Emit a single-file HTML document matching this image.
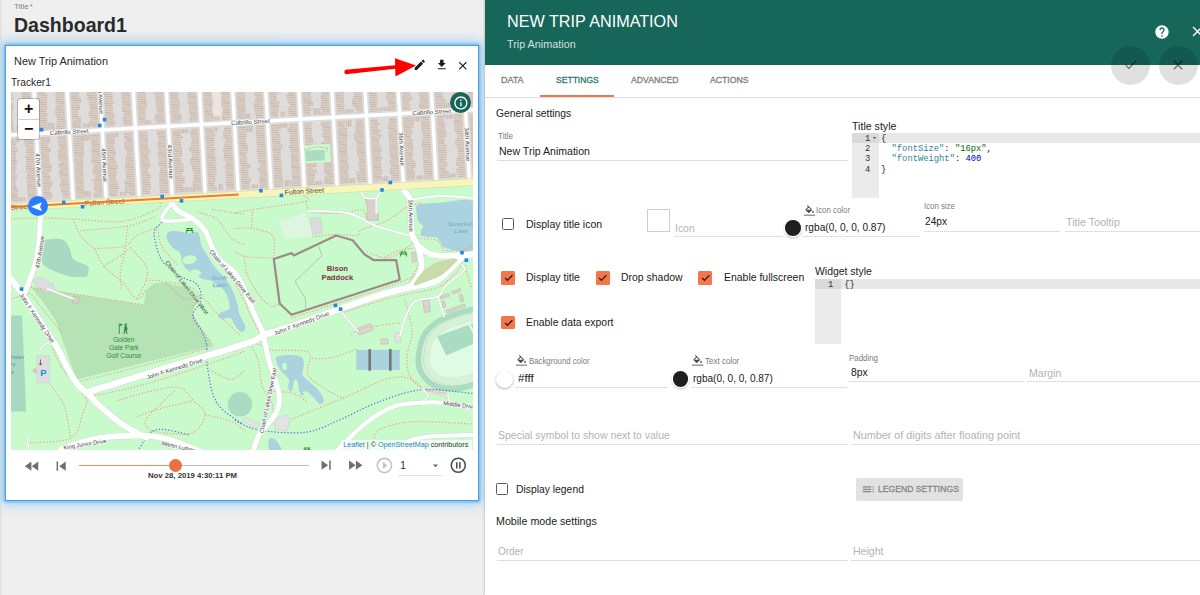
<!DOCTYPE html>
<html lang="en">
<head>
<meta charset="utf-8">
<title>Dashboard1</title>
<style>
html,body{margin:0;padding:0}
body{width:1200px;height:595px;overflow:hidden;position:relative;background:#efefef;font-family:"Liberation Sans",sans-serif}
.t{position:absolute;white-space:nowrap;line-height:normal;display:block;transform-origin:0 0}
.ul{position:absolute;height:1px;display:block;background:repeating-linear-gradient(90deg,#d2d2d2 0 1px,#efefef 1px 2px)}
.ic{position:absolute;display:block}
#card{position:absolute;left:5px;top:45px;width:472px;height:453.5px;background:#fff;border:1px solid #4b9fe3;box-shadow:0 0 3px 1px rgba(60,160,240,.7),0 0 12px 3px rgba(105,190,248,.58)}
#panel{position:absolute;left:485px;top:0;width:715px;height:595px;background:#fff;box-shadow:-1px 0 2px rgba(0,0,0,.16)}
#hdr{position:absolute;left:485px;top:0;width:715px;height:65px;background:#16665a}
.fab{position:absolute;width:39px;height:39px;border-radius:50%;background:rgba(0,0,0,.12)}
.cb{position:absolute;width:10.4px;height:10.4px;border:1.4px solid #5c5c5c;border-radius:1.5px;background:#fff}
.cbx{position:absolute;width:13.5px;height:13.5px;margin:-.2px 0 0 -.3px;border-radius:1.5px;background:#f4764b}
.mono{font-family:"Liberation Mono",monospace;font-size:8.8px;position:absolute;white-space:pre;line-height:10.18px;color:#222}
.gut{position:absolute;background:#ebebeb}
.al{position:absolute;background:#e8e8e8}
.gal{position:absolute;background:#dadada}
#mapwrap{position:absolute;left:11px;top:91.5px;width:462px;height:358px;overflow:hidden;background:#c8facc}
</style>
</head>
<body>
<div id="lstrip" style="position:absolute;left:0;top:0;width:2px;height:595px;background:#e4e4e4"></div>
<div id="card"></div>
<div id="mapwrap">
<svg width="462" height="358" viewBox="11 91.5 462 358" style="display:block;font-family:'Liberation Sans',sans-serif">
<defs>
<pattern id="bld" width="4" height="2.25" patternUnits="userSpaceOnUse"><rect width="4" height="2.25" fill="#d9cec6"/><rect width="4" height=".55" fill="#c4b2a6"/></pattern>
<pattern id="bldh" width="2.2" height="4" patternUnits="userSpaceOnUse"><rect width="2.2" height="4" fill="#d9cec6"/><rect width=".55" height="4" fill="#c4b2a6"/></pattern>
</defs>
<rect x="11" y="91.5" width="462" height="358" fill="#c8facc"/>
<polygon points="30.9,286.8 143.8,304.4 146,289.7 153.6,282.9 165.7,282.1 177.8,285.2 189.9,287.4 198.8,297.1 191.4,312.4 203,330 212.6,345.6 78,378.8 75.6,376.5 55.6,320 42.6,300.9" fill="#b5e3b5"/>
<polygon points="11,315 22.1,315 26.2,410.9 11,410.9" fill="#a8d9c1"/>
<path d="M40.3 242C42.2 239.4 48.1 238.9 52 238.5C55.9 238.1 60.8 237.9 63.8 239.7C66.8 241.4 68.4 245.9 70 249C71.6 252.1 70.3 255.7 73.2 258.5C76.1 261.3 84.9 263.4 87.4 265.6C89.9 267.9 88.4 270.2 88 272C87.6 273.8 88.6 275.7 85 276.2C81.4 276.7 72.9 276.8 66.2 275C59.5 273.2 49.3 269.1 45 265.6C40.7 262.1 41.3 257.9 40.5 254C39.7 250.1 38.4 244.6 40.3 242Z" fill="#a9d9c2"/>
<polygon points="278.5,220.9 305.6,211.5 312.6,236.2 284.4,238.5" fill="#def6df"/>
<polygon points="310.3,217.4 320.9,217.4 322,232.6 312.6,233.8" fill="#dcdcdc" stroke="#c4c4c4" stroke-width=".5"/>
<path d="M167.4 232.4C168.6 230.8 171.4 230.5 174.8 230.5C178.2 230.5 184 232.2 187.7 232.4C191.4 232.6 195 230.9 197 231.5C199 232.1 198.9 233.8 199.7 236.1C200.5 238.4 200.2 241.9 201.6 245.3C203 248.7 205.8 252.7 208.1 256.4C210.4 260.1 213.1 264.4 215.5 267.5C217.9 270.6 220.7 272.4 222.8 274.9C225 277.4 226.6 279.2 228.4 282.3C230.2 285.4 232.4 289.7 233.9 293.4C235.4 297.1 236.7 301.1 237.6 304.5C238.5 307.9 238.3 310.3 239.5 313.7C240.7 317.1 244.2 322 245 324.8C245.8 327.6 245 329.5 244.1 330.4C243.2 331.3 241.2 331.6 239.5 330.4C237.8 329.2 235.5 325.2 233.9 323C232.3 320.8 232.3 318.2 230.2 317.4C228 316.6 223 318.8 221 318.3C219 317.8 217.9 315.8 218.2 314.6C218.5 313.4 221 312.1 222.8 311C224.7 309.9 228.4 310.2 229.3 308.2C230.2 306.2 229.3 302 228.4 298.9C227.5 295.8 225.7 292.2 223.8 289.7C222 287.2 219.3 285.6 217.3 284.1C215.3 282.6 214.3 281.4 211.8 280.5C209.3 279.6 205 279.5 202.5 278.6C200 277.7 199.5 276.4 197 274.9C194.5 273.4 190.2 271.5 187.7 269.4C185.2 267.2 183.4 264.8 182.2 262C181 259.2 181.9 255.2 180.3 252.7C178.8 250.2 175.1 249.3 172.9 247.2C170.8 245 168.3 242.3 167.4 239.8C166.5 237.3 166.2 234 167.4 232.4Z" fill="#aad3df"/>
<ellipse cx="189.6" cy="259.2" rx="7.2" ry="4.4" fill="#c8facc" transform="rotate(-8 189.6 259.2)"/>
<ellipse cx="196" cy="272" rx="5.3" ry="3.1" fill="#c8facc" transform="rotate(12 196 272)"/>
<path d="M417.4 204.4C420.5 203.2 432.3 202.6 440 202.3C447.7 202 470.3 195.8 475 202C479.7 208.2 478.8 242.9 475 249C471.2 255.1 451.3 248.8 446.8 248C442.3 247.2 442.3 244.4 441 243C439.7 241.6 439 238.3 437.4 237.4C435.8 236.5 431.2 236.8 429 236.5C426.8 236.2 422 235.9 420.9 235C419.8 234.1 420.7 231.3 421 230C421.3 228.7 423.5 226.7 423.2 225.6C422.9 224.5 419.8 222.9 419 222C418.2 221.1 417.7 220 417.4 218.5C417.1 217 416.5 212.9 416.5 211C416.5 209.1 414.3 205.6 417.4 204.4Z" fill="#aad3df"/>
<path d="M276.3 356.7C277.8 355.6 282.8 354.7 286.5 354.6C290.2 354.5 298.3 354.8 300.9 356.2C303.5 357.6 303.7 361.1 303.9 363.8C304.1 366.5 301.9 371.6 302.5 374.1C303.1 376.6 306.1 378.4 308 380.2C309.9 382 313.2 384.4 315.2 386.4C317.2 388.4 320.1 391.5 321.4 393.6C322.7 395.7 324.1 399.2 323.8 400.7C323.5 402.2 321 404.1 319.7 403.8C318.4 403.5 316.5 400.1 315.2 398.7C313.9 397.3 312.4 395.7 311.1 394.6C309.8 393.5 307.9 391.6 306.6 391.1C305.3 390.6 302.9 391.1 302.5 391.5C302.1 391.9 304.1 393.5 303.9 394C303.7 394.5 302.1 395.3 301.3 394.6C300.5 393.9 299.3 391.5 298.8 389.5C298.3 387.5 298.4 382.8 297.8 381.3C297.2 379.8 295.4 378.8 294.7 379.2C294 379.6 293.7 382.7 293.3 384.3C292.9 385.9 292.9 389 292.3 389.9C291.7 390.8 290.2 391.2 289.6 390.5C289 389.8 288.3 387.1 288.2 385.4C288.1 383.7 289.6 380.9 289 379.2C288.4 377.5 286 375.8 284.5 374.1C283 372.4 280.5 369.7 279.3 367.9C278.1 366.1 277.1 363.5 276.7 361.8C276.2 360.1 274.8 357.8 276.3 356.7Z" fill="#aad3df"/>
<ellipse cx="284.500" cy="365.900" rx="2.400" ry="3.600" fill="#c8facc"/>
<path d="M269 449.5C268.9 448.1 268.2 443 268.5 441C268.8 439 269.6 437.6 271 437.6C272.4 437.6 275.2 439 277 441C278.8 443 281.2 448.1 282 449.5Z" fill="#aad3df"/>
<path d="M235 296C235.6 297.5 237.2 300.7 238.5 305C239.8 309.3 242.2 318 242.5 322C242.8 326 240.4 327.8 240 329" fill="none"/>
<circle cx="240" cy="403.800" r="12.200" fill="#a9dcc2"/>
<rect x="356.2" y="349.4" width="43.5" height="20" fill="#aad3df"/>
<rect x="368.4" y="348.6" width="2.6" height="21.6" fill="#767676"/><rect x="389" y="348.6" width="2.6" height="21.6" fill="#767676"/>
<clipPath id="stc"><path d="M475 305.6C467.5 306.9 461.8 308.4 455.1 310.7C448.4 313 440.6 315.6 434.9 319.7C429.2 323.8 424 328.5 420.8 335C417.6 341.5 415.8 352.3 415.5 358.8C415.2 365.3 416.5 369.4 419.3 374.1C422.1 378.8 426.6 384 432.1 386.9C437.6 389.8 445.4 391.2 452.5 391.2C459.6 391.2 467.1 389.4 475 386.9C482.9 384.4 492.5 383.8 500 376C507.5 368.2 520 352.2 520 340C520 327.8 507.5 308.7 500 303C492.5 297.3 482.5 304.3 475 305.6Z"/></clipPath>
<g clip-path="url(#stc)">
<path d="M475 305.6C467.5 306.9 461.8 308.4 455.1 310.7C448.4 313 440.6 315.6 434.9 319.7C429.2 323.8 424 328.5 420.8 335C417.6 341.5 415.8 352.3 415.5 358.8C415.2 365.3 416.5 369.4 419.3 374.1C422.1 378.8 426.6 384 432.1 386.9C437.6 389.8 445.4 391.2 452.5 391.2C459.6 391.2 467.1 389.4 475 386.9C482.9 384.4 492.5 383.8 500 376C507.5 368.2 520 352.2 520 340C520 327.8 507.5 308.7 500 303C492.5 297.3 482.5 304.3 475 305.6Z" fill="#e0fbe3" stroke="#d7f1d9" stroke-width="29"/>
<path d="M475 305.6C467.5 306.9 461.8 308.4 455.1 310.7C448.4 313 440.6 315.6 434.9 319.7C429.2 323.8 424 328.5 420.8 335C417.6 341.5 415.8 352.3 415.5 358.8C415.2 365.3 416.5 369.4 419.3 374.1C422.1 378.8 426.6 384 432.1 386.9C437.6 389.8 445.4 391.2 452.5 391.2C459.6 391.2 467.1 389.4 475 386.9C482.9 384.4 492.5 383.8 500 376C507.5 368.2 520 352.2 520 340C520 327.8 507.5 308.7 500 303C492.5 297.3 482.5 304.3 475 305.6Z" fill="none" stroke="#a3c4a8" stroke-width=".8" stroke-dasharray="1.2 1.3" transform="translate(70.5 52.5) scale(.85)"/>
<path d="M475 305.6C467.5 306.9 461.8 308.4 455.1 310.7C448.4 313 440.6 315.6 434.9 319.7C429.2 323.8 424 328.5 420.8 335C417.6 341.5 415.8 352.3 415.5 358.8C415.2 365.3 416.5 369.4 419.3 374.1C422.1 378.8 426.6 384 432.1 386.9C437.6 389.8 445.4 391.2 452.5 391.2C459.6 391.2 467.1 389.4 475 386.9C482.9 384.4 492.5 383.8 500 376C507.5 368.2 520 352.2 520 340C520 327.8 507.5 308.7 500 303C492.5 297.3 482.5 304.3 475 305.6Z" fill="none" stroke="#abdcc2" stroke-width="11.4"/>
<polygon points="437.2,335.8 468.4,324.5 477.5,341.5 446.1,354.9" fill="#a9dcc2"/>
<polygon points="470.5,323.7 480,320.3 489,337.3 479.500,340.7" fill="#a9dcc2"/>
</g>
<path d="M472 428 L440 431 L414 440 L400 449.500 L472 449.500Z" fill="none"/>
<polygon points="365.6,198.5 376,198.5 376,212.6 378.5,213 378.5,219.7 366.8,219.7 366.8,212.6 368,212" fill="#d9d0c9" stroke="#b9aaa0" stroke-width=".5"/>
<polygon points="32,279 40,277 53,283.5 55,290 47,292 38,287.5" fill="#dedede" stroke="#c8c8c8" stroke-width=".5"/>
<polygon points="73,296 79,296.5 78.5,303 72.5,302.5" fill="#d9d0c9" stroke="#b9aaa0" stroke-width=".5"/>
<polygon points="36.8,355.3 49.7,355.3 49.7,382.4 36.8,382.4" fill="#dedede" stroke="#c8c8c8" stroke-width=".5"/>
<polygon points="273.8,420 286,414 290.3,419 287,430.6 276,429" fill="#e3e3e3" stroke="#c8c8c8" stroke-width=".5"/>
<polygon points="244,417 260,423.5 257,427.5 242,421" fill="#e3e3e3" stroke="#c8c8c8" stroke-width=".5"/>
<polygon points="356.7,328.1 370.8,323 373.3,329.4 359.3,334.5" fill="#ddd7d2" stroke="#b9aaa0" stroke-width=".5"/>
<polygon points="394,333 399.5,332 401,341 396,342.5" fill="#e3e3e3" stroke="#c8c8c8" stroke-width=".5"/>
<polygon points="381,338.5 388,338.5 388,343.5 381,343.5" fill="#ddd7d2" stroke="#b9aaa0" stroke-width=".5"/>
<polygon points="422.8,300 429,299 430.4,311.2 424.5,312" fill="#ddd3cc" stroke="#b9aaa0" stroke-width=".5"/>
<polygon points="411.5,252 415.5,251.5 416.5,261 412.5,261.5" fill="#ddd3cc" stroke="#b9aaa0" stroke-width=".5"/>
<polygon points="440.2,296 448.5,293 449.5,295.5 441,298.5" fill="#ddd3cc" stroke="#b9aaa0" stroke-width=".5"/>
<polygon points="451.6,291 460,288 460.8,290.5 452.5,293.5" fill="#ddd3cc" stroke="#b9aaa0" stroke-width=".5"/>
<polygon points="459.1,294 462,293.5 463.7,300.5 460.8,301" fill="#ddd3cc" stroke="#b9aaa0" stroke-width=".5"/>
<polygon points="441.7,301 444.5,300.5 445.7,306.5 443,307" fill="#ddd3cc" stroke="#b9aaa0" stroke-width=".5"/>
<polygon points="446,310 464.5,303.5 465.5,306 447,312.5" fill="#ddd3cc" stroke="#b9aaa0" stroke-width=".5"/>
<polygon points="426,386 448,393.5 447,397 425,389.5" fill="#e3e3e3" stroke="#c8c8c8" stroke-width=".5"/>
<path d="M10.9 218.5C15.8 218.3 29.9 217.4 40.3 217.4C50.7 217.4 59.5 217.9 73.2 218.5C86.9 219.1 108.9 222.5 122.6 220.9C136.3 219.3 149.1 212.2 155.6 209.1C162.1 205.9 160.5 203.2 161.5 202" fill="none" stroke="#f49f8a" stroke-width="1.15" stroke-dasharray="1.3 1.8"/>
<path d="M73.2 218.5C74.4 221.2 76.8 229.9 80.3 235C83.8 240.1 90.5 244 94.4 249.1C98.3 254.2 99.1 260.1 103.8 265.6C108.5 271.1 117.1 276.5 122.6 282C128.1 287.5 132.9 297.3 136.8 298.5C140.7 299.7 144.6 290.6 146.2 289" fill="none" stroke="#f49f8a" stroke-width="1.15" stroke-dasharray="1.3 1.8"/>
<path d="M80.3 230.3C88.2 229.5 114.9 227.9 127.4 225.6C140 223.2 150.9 217.8 155.6 216.2" fill="none" stroke="#f49f8a" stroke-width="1.15" stroke-dasharray="1.3 1.8"/>
<path d="M127.4 225.6C127 229.5 126.2 241.3 125 249.1C123.8 256.9 120.9 266.1 120.3 272.6C119.7 279.1 121.3 285.4 121.5 288" fill="none" stroke="#f49f8a" stroke-width="1.15" stroke-dasharray="1.3 1.8"/>
<path d="M94.4 248C99.5 247.6 117.9 247.8 125 245.6C132.1 243.4 131.7 237.9 136.8 235C141.9 232.1 152.5 229.2 155.6 228" fill="none" stroke="#f49f8a" stroke-width="1.15" stroke-dasharray="1.3 1.8"/>
<path d="M103.8 265.6C106.9 263.6 117.9 257.1 122.6 253.8C127.3 250.5 130.4 247 132 245.6" fill="none" stroke="#f49f8a" stroke-width="1.15" stroke-dasharray="1.3 1.8"/>
<path d="M132 249C134.4 251.8 143.8 260.5 146.2 265.6C148.6 270.7 147.8 274.2 146.2 279.7C144.6 285.2 138.4 295.4 136.8 298.5" fill="none" stroke="#f49f8a" stroke-width="1.15" stroke-dasharray="1.3 1.8"/>
<path d="M146.2 279.7C149.3 280.1 158.7 278.9 165 282C171.3 285.1 177.9 296.2 183.8 298.5C189.7 300.8 194.8 293.6 200.3 296C205.8 298.4 210.1 306.1 216.8 312.6C223.5 319.1 236.4 331.3 240.3 335" fill="none" stroke="#f49f8a" stroke-width="1.15" stroke-dasharray="1.3 1.8"/>
<path d="M158 225.6C158.4 228.3 158.4 236.9 160.3 242C162.2 247.1 166.6 252.3 169.7 256.2C172.8 260.1 177.5 264 179.1 265.6" fill="none" stroke="#f49f8a" stroke-width="1.15" stroke-dasharray="1.3 1.8"/>
<path d="M198 211.5C201.1 212.7 211.3 214.2 216.8 218.5C222.3 222.8 226.2 233.1 230.9 237.4C235.6 241.7 242.7 243.2 245 244.4" fill="none" stroke="#f49f8a" stroke-width="1.15" stroke-dasharray="1.3 1.8"/>
<path d="M212 209 L245 213.8" fill="none" stroke="#f49f8a" stroke-width="1.15" stroke-dasharray="1.3 1.8"/>
<path d="M10.9 298.5C12.2 298.1 15.7 296.8 19 296C22.3 295.2 27.1 291.8 30.9 293.8C34.7 295.8 36.9 301.7 42 308C47.1 314.3 58.2 327.6 61.5 331.5" fill="none" stroke="#f49f8a" stroke-width="1.15" stroke-dasharray="1.3 1.8"/>
<path d="M10.9 275 L19 289" fill="none" stroke="#f49f8a" stroke-width="1.15" stroke-dasharray="1.3 1.8"/>
<path d="M235 212.6C237.9 212 240.8 211 252.6 209.1C264.4 207.2 297.2 203.2 305.6 200.9C314 198.6 303.6 196 303.2 195" fill="none" stroke="#f49f8a" stroke-width="1.15" stroke-dasharray="1.3 1.8"/>
<path d="M235 228C237.8 228 245.2 226.8 251.5 228C257.8 229.2 268.9 230.3 272.6 235C276.3 239.7 273.6 252.7 273.8 256.2" fill="none" stroke="#f49f8a" stroke-width="1.15" stroke-dasharray="1.3 1.8"/>
<path d="M251.5 228 L252.6 209.1" fill="none" stroke="#f49f8a" stroke-width="1.15" stroke-dasharray="1.3 1.8"/>
<path d="M305.6 200.9C306.8 202.7 306.3 209.6 312.6 211.5C318.9 213.4 335 213 343.2 212.6C351.4 212.2 358.1 208 362 209C365.9 210 366 216.9 366.8 218.5" fill="none" stroke="#f49f8a" stroke-width="1.15" stroke-dasharray="1.3 1.8"/>
<path d="M312.6 236.2C316.5 235.8 328.7 234 336.2 233.8C343.7 233.6 353.1 235.8 357.4 235C361.7 234.2 357.3 231.3 362 229C366.7 226.7 378.1 224.6 385.6 220.9C393.1 217.2 400.5 210 406.8 206.8C413.1 203.7 420.5 202.8 423.2 202" fill="none" stroke="#f49f8a" stroke-width="1.15" stroke-dasharray="1.3 1.8"/>
<path d="M366.8 251.5C369.9 252.5 380.1 257.2 385.6 257.4C391.1 257.6 395 255.2 399.7 252.6C404.4 250 411.4 243.8 413.8 242" fill="none" stroke="#f49f8a" stroke-width="1.15" stroke-dasharray="1.3 1.8"/>
<path d="M291.5 317.4C309.5 311.5 379.3 289.5 399.7 282C420.1 274.5 411.4 274.2 413.8 272.6" fill="none" stroke="#f49f8a" stroke-width="1.15" stroke-dasharray="1.3 1.8"/>
<path d="M235 251.5C237 252.3 240.5 255.2 246.8 256.2C253.1 257.2 268.3 257.2 272.6 257.4" fill="none" stroke="#f49f8a" stroke-width="1.15" stroke-dasharray="1.3 1.8"/>
<path d="M244.4 256.2C244.8 258.9 244.5 266.3 246.8 272.6C249.2 278.9 254.6 288.3 258.5 293.8C262.4 299.3 266.8 304 270.3 305.6C273.8 307.2 278.1 303.6 279.7 303.2" fill="none" stroke="#f49f8a" stroke-width="1.15" stroke-dasharray="1.3 1.8"/>
<path d="M340.9 312.6C348.2 310.3 373.4 302.3 385 299C396.6 295.7 401.9 295 410.7 293C419.5 291 430.9 290 438 287C445.1 284 448.7 279 453 275C457.3 271 461.9 264.8 463.7 262.8" fill="none" stroke="#f49f8a" stroke-width="1.15" stroke-dasharray="1.3 1.8"/>
<path d="M52 345.9C53.6 349.4 57.6 360.7 61.5 367C65.4 373.3 71.3 378 75.6 383.5C79.9 389 85.4 397.2 87.4 400" fill="none" stroke="#f49f8a" stroke-width="1.15" stroke-dasharray="1.3 1.8"/>
<path d="M49.7 383.5C52.1 387 60.3 395.7 63.8 404.7C67.3 413.7 69.7 432.1 70.9 437.6" fill="none" stroke="#f49f8a" stroke-width="1.15" stroke-dasharray="1.3 1.8"/>
<path d="M87.4 400C86.6 402.3 85.3 407.7 82.6 414C79.8 420.3 79.9 432.9 70.9 437.6C61.9 442.3 35.6 441.6 28.5 442.4" fill="none" stroke="#f49f8a" stroke-width="1.15" stroke-dasharray="1.3 1.8"/>
<path d="M94.4 395.3C103 393.3 127.8 388.6 146.2 383.5C164.6 378.4 188.5 370.2 205 364.7C221.5 359.2 238.3 353 245 350.6" fill="none" stroke="#f49f8a" stroke-width="1.15" stroke-dasharray="1.3 1.8"/>
<path d="M118 400C123.5 398.4 140.7 392.8 150.9 390.6C161.1 388.4 172.1 385.4 179.1 387C186.1 388.6 188.9 395.5 193.2 400C197.5 404.5 205.4 408.5 205 414C204.6 419.5 199.9 430.2 190.9 433C181.9 435.8 157.6 431 150.9 430.6" fill="none" stroke="#f49f8a" stroke-width="1.15" stroke-dasharray="1.3 1.8"/>
<path d="M136.8 416.5C139.9 415.3 146.2 412.1 155.6 409.4C165 406.6 186.9 401.6 193.2 400" fill="none" stroke="#f49f8a" stroke-width="1.15" stroke-dasharray="1.3 1.8"/>
<path d="M150.9 430.6C150.1 428.6 142.3 425.5 146.2 418.8C150.1 412.1 169.7 395.3 174.4 390.6" fill="none" stroke="#f49f8a" stroke-width="1.15" stroke-dasharray="1.3 1.8"/>
<path d="M205 414C209.3 415.2 224.2 418.2 230.9 421C237.6 423.8 242.7 429 245 430.6" fill="none" stroke="#f49f8a" stroke-width="1.15" stroke-dasharray="1.3 1.8"/>
<path d="M209.7 369.4C213.2 371 225 378.8 230.9 378.8C236.8 378.8 242.7 371 245 369.4" fill="none" stroke="#f49f8a" stroke-width="1.15" stroke-dasharray="1.3 1.8"/>
<path d="M78 381.5C88.3 378.9 117.7 371.8 140 366C162.3 360.2 200 349.8 212 346.5" fill="none" stroke="#f49f8a" stroke-width="1.15" stroke-dasharray="1.3 1.8"/>
<path d="M235 350.6C238.5 349.4 250.3 343.7 256.2 343.5C262.1 343.3 262.1 348.2 270.3 349.4C278.5 350.6 298.6 349.2 305.6 350.6C312.7 352 307.9 356.6 312.6 357.6C317.3 358.6 326.3 358.1 333.8 356.5C341.3 354.9 353.5 349.6 357.4 348.2" fill="none" stroke="#f49f8a" stroke-width="1.15" stroke-dasharray="1.3 1.8"/>
<path d="M310.3 357.6C309.9 360.3 305.6 368.9 308 374C310.4 379.1 318.5 384.3 324.4 388.2C330.3 392.1 340.1 396 343.2 397.6" fill="none" stroke="#f49f8a" stroke-width="1.15" stroke-dasharray="1.3 1.8"/>
<path d="M291.5 418.8C300.1 415.3 327.5 404.3 343.2 397.6C358.9 390.9 374.6 382.1 385.6 378.8C396.6 375.5 402.8 376 409.1 377.6C415.4 379.2 420.9 386.4 423.2 388.2" fill="none" stroke="#f49f8a" stroke-width="1.15" stroke-dasharray="1.3 1.8"/>
<path d="M373.8 437.6C375 436 374.2 430.9 380.9 428.2C387.6 425.5 398.5 422 413.8 421.2C429.1 420.4 462.8 423.1 472.6 423.5" fill="none" stroke="#f49f8a" stroke-width="1.15" stroke-dasharray="1.3 1.8"/>
<path d="M406.8 350.6C407.2 354.5 406.4 367.7 409.1 374C411.8 380.3 416.9 385 423.2 388.2C429.5 391.4 442.9 392.2 446.8 393" fill="none" stroke="#f49f8a" stroke-width="1.15" stroke-dasharray="1.3 1.8"/>
<path d="M270.3 390.6C274.2 391 287.5 391 293.8 393C300.1 395 305.6 400.8 308 402.4" fill="none" stroke="#f49f8a" stroke-width="1.15" stroke-dasharray="1.3 1.8"/>
<path d="M350.3 334C353.1 332.8 358.6 328.9 366.8 327C375 325.1 394.2 323.2 399.7 322.4" fill="none" stroke="#f49f8a" stroke-width="1.15" stroke-dasharray="1.3 1.8"/>
<path d="M405 300C406.2 305 411.5 321.7 412 330C412.5 338.3 408.7 346.7 408 350" fill="none" stroke="#f49f8a" stroke-width="1.15" stroke-dasharray="1.3 1.8"/>
<path d="M30.9 286.8 L143.8 304.4" fill="none" stroke="#f49f8a" stroke-width="1.15" stroke-dasharray="1.3 1.8"/>
<path d="M165.7 281C169.7 281.9 184.2 283.7 189.9 286.4C195.6 289.1 199.4 292.8 199.8 297.1C200.2 301.4 190.1 304.3 192.4 312.4C194.7 320.5 210.1 340.1 213.6 345.6" fill="none" stroke="#f49f8a" stroke-width="1.15" stroke-dasharray="1.3 1.8"/>
<path d="M235 283C236.5 285.8 241.2 294.2 244 300C246.8 305.8 249 312 252 318C255 324 260.3 333 262 336" fill="none" stroke="#f49f8a" stroke-width="1.15" stroke-dasharray="1.3 1.8"/>
<path d="M249 341C250.5 344.2 255.8 352.7 258 360C260.2 367.3 259.8 378.3 262 385C264.2 391.7 269 395.2 271 400C273 404.8 273.5 411.7 274 414" fill="none" stroke="#f49f8a" stroke-width="1.15" stroke-dasharray="1.3 1.8"/>
<path d="M385 256.8C387.5 255.7 395.2 251.5 400 250C404.8 248.5 411.4 248.1 413.7 247.7" fill="none" stroke="#f49f8a" stroke-width="1.15" stroke-dasharray="1.3 1.8"/>
<path d="M409 282.5C410.4 279.7 416.1 269.6 417.5 265.8C418.9 262 417.5 260.8 417.5 259.8" fill="none" stroke="#f49f8a" stroke-width="1.15" stroke-dasharray="1.3 1.8"/>
<path d="M465.2 264.3C465.6 266.1 466.3 271 467.4 275C468.5 279 471.2 286.2 472 288.5" fill="none" stroke="#f49f8a" stroke-width="1.15" stroke-dasharray="1.3 1.8"/>
<path d="M417.5 234.1C417.9 234.7 416.7 237 419.8 237.9C422.9 238.8 432.6 237.8 436.4 239.4C440.2 241 441 245.9 442.5 247.7C444 249.5 442 249.8 445.5 250C449 250.2 459.2 250.1 463.7 249.2C468.2 248.3 471.2 245.4 472.7 244.7" fill="none" stroke="#f49f8a" stroke-width="1.15" stroke-dasharray="1.3 1.8"/>
<path d="M235 420C238.9 421.6 246.7 427.4 258.5 429.4C270.3 431.4 291.9 433.6 305.6 431.8C319.3 430 329.1 423.7 340.9 418.8C352.7 413.9 362.9 407.3 376.2 402.4C389.5 397.5 404.8 391 420.9 389.4C437 387.8 464 392.3 472.6 392.9" fill="none" stroke="#4f6fe6" stroke-width="1.2" stroke-dasharray="1.3 1.9"/>
<path d="M207 345C207.1 348.7 205.9 357.4 207.5 367C209.1 376.6 211 393 216.8 402.4C222.7 411.8 238.3 420 242.6 423.5" fill="none" stroke="#4f6fe6" stroke-width="1.2" stroke-dasharray="1.3 1.9"/>
<path d="M139.1 448.2C141.8 445.1 147.4 431.8 155.6 429.4C163.8 427 183 433.3 188.5 434.1" fill="none" stroke="#4f6fe6" stroke-width="1.2" stroke-dasharray="1.3 1.9"/>
<path d="M161.7 221.8C160.4 223.6 154.4 227 154.1 232.8C153.8 238.6 157.5 250.6 160 256.4C162.5 262.2 165.5 264.1 169.2 267.5C172.9 270.9 177.9 274.3 182.2 276.8C186.5 279.3 192 279.9 195.1 282.3C198.2 284.8 199.9 288.1 200.7 291.5C201.5 294.9 200.9 299.2 199.7 302.6C198.5 306 194.2 309.1 193.3 311.9C192.4 314.7 192.7 315.9 194.2 319.3C195.7 322.7 200.4 327.9 202.5 332.2C204.6 336.5 206.2 342.9 207 345" fill="none" stroke="#4f6fe6" stroke-width="1.2" stroke-dasharray="1.3 1.9"/>
<path d="M308 210.3C314.7 210.7 336.6 210.1 348 212.6C359.4 215.1 366 221.9 376.2 225.6C386.4 229.3 403.5 233.4 409 235" fill="none" stroke="#d6d9d6" stroke-width="2.5" stroke-linecap="round"/>
<path d="M413 198.8C417.7 198.2 430.7 195.7 441 195.5C451.3 195.3 469.3 197.2 475 197.6" fill="none" stroke="#d6d9d6" stroke-width="2.7" stroke-linecap="round"/>
<path d="M462.2 264.3C462.4 265.3 466.5 266.9 463.7 270.4C460.9 273.9 449.8 281.2 445.5 285.5C441.2 289.8 443 293.5 438 296C433 298.5 420.6 297.4 415.3 300.6C410 303.8 408.8 309.3 406.2 315C403.6 320.7 401 331.7 400 335" fill="none" stroke="#d6d9d6" stroke-width="2.4" stroke-linecap="round"/>
<path d="M438 296 L444 316" fill="none" stroke="#d6d9d6" stroke-width="2.2" stroke-linecap="round"/>
<path d="M360.9 189.5C361.5 190.7 361.8 195.5 364.4 196.8C366.9 198.1 373.4 198.7 376.2 197.5C379 196.3 380.5 190.8 381.4 189.5" fill="none" stroke="#d6d9d6" stroke-width="2.3" stroke-linecap="round"/>
<path d="M376.2 197.5 L376.2 213" fill="none" stroke="#d6d9d6" stroke-width="2.1" stroke-linecap="round"/>
<path d="M47 288C49.5 289 57.7 292.3 62 294C66.3 295.7 71.2 297.3 73 298" fill="none" stroke="#d6d9d6" stroke-width="2.3" stroke-linecap="round"/>
<path d="M40 349C40.8 348.1 42.8 344.8 45 343.5C47.2 342.2 51.7 341.8 53 341.5" fill="none" stroke="#d6d9d6" stroke-width="2.1" stroke-linecap="round"/>
<path d="M340 310C341.2 311.3 344.8 315.4 347 318C349.2 320.6 351.2 323.4 353 325.5C354.8 327.6 357.2 329.8 358 330.6" fill="none" stroke="#d6d9d6" stroke-width="2.2" stroke-linecap="round"/>
<path d="M423 388.5C423.8 389.8 428.3 393.8 428 396C427.7 398.2 422.2 401 421 402" fill="none" stroke="#d6d9d6" stroke-width="2.2" stroke-linecap="round"/>
<path d="M448 394 L449 401.5" fill="none" stroke="#d6d9d6" stroke-width="2.2" stroke-linecap="round"/>
<path d="M27 437 L29 449.5" fill="none" stroke="#d6d9d6" stroke-width="2.2" stroke-linecap="round"/>
<path d="M40.3 205C40.3 207.2 40.6 211.8 40.3 218.5C40 225.2 39.5 237.2 38.5 245C37.5 252.8 36.6 257.9 34.4 265.6C32.1 273.4 26.6 287.2 25 291.5" fill="none" stroke="#d6d9d6" stroke-width="5.9" stroke-linecap="round"/>
<path d="M10.5 277.5C12.5 280.2 18.4 288.1 22.5 294C26.6 299.9 30.9 306.2 35.1 312.7C39.3 319.2 43.9 327 47.7 332.9C51.5 338.8 54.4 342.1 57.8 348C61.2 353.9 64.5 362.1 67.9 368.2C71.3 374.3 74.6 380.4 78 384.6C81.4 388.8 83.9 389.4 88.1 393.4C92.3 397.4 96.9 403.1 103.2 408.6C109.5 414.1 118.8 421.5 126 426.2C133.2 430.9 142.8 435.2 146.1 437" fill="none" stroke="#d6d9d6" stroke-width="6.7" stroke-linecap="round"/>
<path d="M86.2 392C96.8 388.8 123.5 380.6 150 372.5C176.5 364.4 225.7 349.9 245 343.5C264.3 337.1 256.4 337.5 265.6 334.1C274.8 330.7 287.4 327.4 300 323C312.6 318.6 326.7 313 340.9 308C355.1 303 373.6 296.5 385 293C396.4 289.5 400.9 289 409.2 287C417.5 285 428.3 283.8 434.9 281C441.4 278.2 444 274.4 448.5 270.4C453 266.4 457.6 259.8 462 257C466.4 254.2 472.8 254.1 475 253.5" fill="none" stroke="#d6d9d6" stroke-width="7.300000000000001" stroke-linecap="round"/>
<path d="M61.5 448.2C67.8 446.4 85 439.8 99.1 437.6C113.2 435.5 134.4 435 146.2 435.3C158 435.6 162.2 437.4 170 439.5C177.8 441.6 188.2 446.3 193.2 448.2C198.2 450.1 198.9 450.5 200 451" fill="none" stroke="#d6d9d6" stroke-width="6.5" stroke-linecap="round"/>
<path d="M169.7 197C170.9 199 172.9 205.5 176.8 209.1C180.7 212.7 188.5 215 193.2 218.5C197.9 222 201.1 224 205 230.3C208.9 236.6 211.8 249.1 216.8 256.2C221.8 263.2 230.4 267.1 235 272.6C239.6 278.1 241.3 282.4 244.4 289.1C247.5 295.8 250.8 305.6 253.8 312.6C256.8 319.6 260.6 326.1 262.5 331C264.4 335.9 263.9 337.3 265 342.3C266.1 347.3 267.4 354.7 269.1 360.8C270.8 366.9 273.5 373.4 275.2 379.2C276.9 385 278.9 390.5 279.3 395.6C279.7 400.7 279 405.6 277.3 410C275.6 414.4 272.2 418.2 269.1 422.3C266 426.4 261.5 429.7 258.8 434.6C256.1 439.6 253.7 449.1 252.7 452" fill="none" stroke="#d6d9d6" stroke-width="5.9" stroke-linecap="round"/>
<path d="M172 202C170.4 204.9 159.1 216.9 162.6 219.7C166.1 222.4 188.1 218.7 193.2 218.5" fill="none" stroke="#d6d9d6" stroke-width="4.3" stroke-linecap="round"/>
<path d="M401.5 185C402.2 186.2 404.1 189.8 405.5 192C406.9 194.2 409.1 194.7 410 198.5C410.9 202.3 410.3 209.1 410.7 215C411.1 220.9 411.1 229.2 412.2 234.1C413.3 239 416 240.4 417.5 244.7C419 249 420.8 255.5 421.3 259.8C421.8 264.1 421.9 266.6 420.6 270.4C419.3 274.2 416.4 279.5 413.7 282.5C411 285.5 406.2 287.5 404.7 288.5" fill="none" stroke="#d6d9d6" stroke-width="6.5" stroke-linecap="round"/>
<path d="M417.5 244.7C419.6 246.2 425.7 251.9 430.4 253.7C435.1 255.5 438.1 255.3 445.5 255.3C452.9 255.3 470.1 253.8 475 253.5" fill="none" stroke="#d6d9d6" stroke-width="6.5" stroke-linecap="round"/>
<path d="M333.8 452C334.9 451.1 334.8 451.8 340.1 446.9C345.4 442 356.8 429.4 365.7 422.6C374.6 415.8 384.4 409.4 393.8 406C403.2 402.6 413.8 402.8 421.9 402.2C430 401.6 433.4 401.3 442.3 402.2C451.2 403.1 469.6 406.4 475 407.3" fill="none" stroke="#d6d9d6" stroke-width="4.9" stroke-linecap="round"/>
<path d="M399.7 449.5C401.4 447.9 404.9 442.2 410 440C415.1 437.8 419.6 436.9 430 436C440.4 435.1 465.5 434.8 472.6 434.5" fill="none" stroke="#d6d9d6" stroke-width="4.9" stroke-linecap="round"/>
<path d="M308 210.3C314.7 210.7 336.6 210.1 348 212.6C359.4 215.1 366 221.9 376.2 225.6C386.4 229.3 403.5 233.4 409 235" fill="none" stroke="#fff" stroke-width="1.6" stroke-linecap="round"/>
<path d="M413 198.8C417.7 198.2 430.7 195.7 441 195.5C451.3 195.3 469.3 197.2 475 197.6" fill="none" stroke="#fff" stroke-width="1.8" stroke-linecap="round"/>
<path d="M462.2 264.3C462.4 265.3 466.5 266.9 463.7 270.4C460.9 273.9 449.8 281.2 445.5 285.5C441.2 289.8 443 293.5 438 296C433 298.5 420.6 297.4 415.3 300.6C410 303.8 408.8 309.3 406.2 315C403.6 320.7 401 331.7 400 335" fill="none" stroke="#fff" stroke-width="1.5" stroke-linecap="round"/>
<path d="M438 296 L444 316" fill="none" stroke="#fff" stroke-width="1.3" stroke-linecap="round"/>
<path d="M360.9 189.5C361.5 190.7 361.8 195.5 364.4 196.8C366.9 198.1 373.4 198.7 376.2 197.5C379 196.3 380.5 190.8 381.4 189.5" fill="none" stroke="#fff" stroke-width="1.4" stroke-linecap="round"/>
<path d="M376.2 197.5 L376.2 213" fill="none" stroke="#fff" stroke-width="1.2" stroke-linecap="round"/>
<path d="M47 288C49.5 289 57.7 292.3 62 294C66.3 295.7 71.2 297.3 73 298" fill="none" stroke="#fff" stroke-width="1.4" stroke-linecap="round"/>
<path d="M40 349C40.8 348.1 42.8 344.8 45 343.5C47.2 342.2 51.7 341.8 53 341.5" fill="none" stroke="#fff" stroke-width="1.2" stroke-linecap="round"/>
<path d="M340 310C341.2 311.3 344.8 315.4 347 318C349.2 320.6 351.2 323.4 353 325.5C354.8 327.6 357.2 329.8 358 330.6" fill="none" stroke="#fff" stroke-width="1.3" stroke-linecap="round"/>
<path d="M423 388.5C423.8 389.8 428.3 393.8 428 396C427.7 398.2 422.2 401 421 402" fill="none" stroke="#fff" stroke-width="1.3" stroke-linecap="round"/>
<path d="M448 394 L449 401.5" fill="none" stroke="#fff" stroke-width="1.3" stroke-linecap="round"/>
<path d="M27 437 L29 449.5" fill="none" stroke="#fff" stroke-width="1.3" stroke-linecap="round"/>
<path d="M40.3 205C40.3 207.2 40.6 211.8 40.3 218.5C40 225.2 39.5 237.2 38.5 245C37.5 252.8 36.6 257.9 34.4 265.6C32.1 273.4 26.6 287.2 25 291.5" fill="none" stroke="#fff" stroke-width="5" stroke-linecap="round"/>
<path d="M10.5 277.5C12.5 280.2 18.4 288.1 22.5 294C26.6 299.9 30.9 306.2 35.1 312.7C39.3 319.2 43.9 327 47.7 332.9C51.5 338.8 54.4 342.1 57.8 348C61.2 353.9 64.5 362.1 67.9 368.2C71.3 374.3 74.6 380.4 78 384.6C81.4 388.8 83.9 389.4 88.1 393.4C92.3 397.4 96.9 403.1 103.2 408.6C109.5 414.1 118.8 421.5 126 426.2C133.2 430.9 142.8 435.2 146.1 437" fill="none" stroke="#fff" stroke-width="5.8" stroke-linecap="round"/>
<path d="M86.2 392C96.8 388.8 123.5 380.6 150 372.5C176.5 364.4 225.7 349.9 245 343.5C264.3 337.1 256.4 337.5 265.6 334.1C274.8 330.7 287.4 327.4 300 323C312.6 318.6 326.7 313 340.9 308C355.1 303 373.6 296.5 385 293C396.4 289.5 400.9 289 409.2 287C417.5 285 428.3 283.8 434.9 281C441.4 278.2 444 274.4 448.5 270.4C453 266.4 457.6 259.8 462 257C466.4 254.2 472.8 254.1 475 253.5" fill="none" stroke="#fff" stroke-width="6.4" stroke-linecap="round"/>
<path d="M61.5 448.2C67.8 446.4 85 439.8 99.1 437.6C113.2 435.5 134.4 435 146.2 435.3C158 435.6 162.2 437.4 170 439.5C177.8 441.6 188.2 446.3 193.2 448.2C198.2 450.1 198.9 450.5 200 451" fill="none" stroke="#fff" stroke-width="5.6" stroke-linecap="round"/>
<path d="M169.7 197C170.9 199 172.9 205.5 176.8 209.1C180.7 212.7 188.5 215 193.2 218.5C197.9 222 201.1 224 205 230.3C208.9 236.6 211.8 249.1 216.8 256.2C221.8 263.2 230.4 267.1 235 272.6C239.6 278.1 241.3 282.4 244.4 289.1C247.5 295.8 250.8 305.6 253.8 312.6C256.8 319.6 260.6 326.1 262.5 331C264.4 335.9 263.9 337.3 265 342.3C266.1 347.3 267.4 354.7 269.1 360.8C270.8 366.9 273.5 373.4 275.2 379.2C276.9 385 278.9 390.5 279.3 395.6C279.7 400.7 279 405.6 277.3 410C275.6 414.4 272.2 418.2 269.1 422.3C266 426.4 261.5 429.7 258.8 434.6C256.1 439.6 253.7 449.1 252.7 452" fill="none" stroke="#fff" stroke-width="5" stroke-linecap="round"/>
<path d="M172 202C170.4 204.9 159.1 216.9 162.6 219.7C166.1 222.4 188.1 218.7 193.2 218.5" fill="none" stroke="#fff" stroke-width="3.4" stroke-linecap="round"/>
<path d="M401.5 185C402.2 186.2 404.1 189.8 405.5 192C406.9 194.2 409.1 194.7 410 198.5C410.9 202.3 410.3 209.1 410.7 215C411.1 220.9 411.1 229.2 412.2 234.1C413.3 239 416 240.4 417.5 244.7C419 249 420.8 255.5 421.3 259.8C421.8 264.1 421.9 266.6 420.6 270.4C419.3 274.2 416.4 279.5 413.7 282.5C411 285.5 406.2 287.5 404.7 288.5" fill="none" stroke="#fff" stroke-width="5.6" stroke-linecap="round"/>
<path d="M417.5 244.7C419.6 246.2 425.7 251.9 430.4 253.7C435.1 255.5 438.1 255.3 445.5 255.3C452.9 255.3 470.1 253.8 475 253.5" fill="none" stroke="#fff" stroke-width="5.6" stroke-linecap="round"/>
<path d="M333.8 452C334.9 451.1 334.8 451.8 340.1 446.9C345.4 442 356.8 429.4 365.7 422.6C374.6 415.8 384.4 409.4 393.8 406C403.2 402.6 413.8 402.8 421.9 402.2C430 401.6 433.4 401.3 442.3 402.2C451.2 403.1 469.6 406.4 475 407.3" fill="none" stroke="#fff" stroke-width="4" stroke-linecap="round"/>
<path d="M399.7 449.5C401.4 447.9 404.9 442.2 410 440C415.1 437.8 419.6 436.9 430 436C440.4 435.1 465.5 434.8 472.6 434.5" fill="none" stroke="#fff" stroke-width="4" stroke-linecap="round"/>
<path d="M413.7 284.8C412.8 283.5 418.8 275.3 422 272C425.2 268.7 431.3 264.7 434.9 262.8C438.5 260.9 442.6 260.1 446 259.5C449.4 258.9 457 257.8 457.6 259C458.2 260.2 452.5 265.1 450 267.5C447.5 269.9 444.3 272.9 441 274.9C437.7 276.8 432.1 279 428 280.5C423.9 282 414.6 286.1 413.7 284.8Z" fill="#c9dba9"/>
<polygon points="425.8,252.2 430.4,257.5 425.1,259" fill="#c8facc"/>
<polygon points="273.8,258.5 291.5,252.6 293.8,255 336.2,235 352.6,239.7 364.4,253.8 373.8,259.7 396.2,259.7 399.7,279.2 291.5,314.2 279.7,303" fill="none" stroke="#9e8a86" stroke-width="2.2" stroke-linejoin="round"/>
<polyline points="318.5,245.6 322,255 295,280.9 305.6,298.5 305.6,310.3" fill="none" stroke="#a8a39a" stroke-width=".6"/>
<g transform="rotate(-3.14 11 206.8)">
<rect x="-10" y="60" width="520" height="144" fill="#dedddc"/>
<polygon points="10.8,61.5 19.3,61.5 19.3,63.8 19.6,63.8 19.6,66 18.6,66 18.6,72.8 18.6,72.8 18.6,77.2 17.3,77.2 17.3,79.5 21,79.5 21,81.8 18,81.8 18,84 19.6,84 19.6,88.5 18.6,88.5 18.6,90.8 18.6,90.8 18.6,97.5 19.6,97.5 19.6,99.8 17.3,99.8 17.3,102 19,102 19,108.8 18,108.8 18,115.5 17.3,115.5 17.3,120 18,120 18,122.2 18,122.2 18,129 19,129 19,131.2 10.8,131.2" fill="url(#bld)"/>
<polygon points="36.9,61.5 28.1,61.5 28.1,63.8 26.7,63.8 26.7,66 30.4,66 30.4,70.5 26.7,70.5 26.7,72.8 29.1,72.8 29.1,79.5 30.4,79.5 30.4,81.8 28.4,81.8 28.4,84 26.7,84 26.7,86.2 30.4,86.2 30.4,88.5 30.4,88.5 30.4,90.8 27.5,90.8 27.5,97.5 28.1,97.5 28.1,102 27.5,102 27.5,108.8 27.5,108.8 27.5,113.2 28.4,113.2 28.4,115.5 28.7,115.5 28.7,117.8 29.1,117.8 29.1,124.5 28.4,124.5 28.4,131.2 36.9,131.2" fill="url(#bld)"/>
<rect x="20.8" y="126.2" width="9" height="5" fill="url(#bldh)"/>
<polygon points="10.8,138.2 19.3,138.2 19.3,144.9 18.6,144.9 18.6,147.2 21,147.2 21,151.7 19,151.7 19,156.2 19,156.2 19,160.7 19.6,160.7 19.6,162.9 18.6,162.9 18.6,169.7 17.3,169.7 17.3,174.2 19.3,174.2 19.3,178.7 17.3,178.7 17.3,183.2 17.3,183.2 17.3,187.7 18.6,187.7 18.6,189.9 19.3,189.9 19.3,194.4 18.6,194.4 18.6,196.7 19.3,196.7 19.3,201.3 10.8,201.3" fill="url(#bld)"/>
<polygon points="36.9,138.2 27.5,138.2 27.5,142.7 28.1,142.7 28.1,147.2 29.7,147.2 29.7,151.7 28.4,151.7 28.4,153.9 30.4,153.9 30.4,156.2 27.5,156.2 27.5,158.4 28.7,158.4 28.7,162.9 28.7,162.9 28.7,165.2 28.1,165.2 28.1,169.7 27.5,169.7 27.5,171.9 28.7,171.9 28.7,176.4 28.1,176.4 28.1,183.2 28.4,183.2 28.4,185.4 28.1,185.4 28.1,192.2 28.4,192.2 28.4,196.7 28.4,196.7 28.4,201.2 28.7,201.2 28.7,201.3 36.9,201.3" fill="url(#bld)"/>
<rect x="19.3" y="138.2" width="4" height="4" fill="url(#bldh)"/>
<rect x="18.8" y="197.3" width="7" height="4" fill="url(#bldh)"/>
<polygon points="43.9,61.5 52.4,61.5 52.4,66 51.1,66 51.1,68.2 52.7,68.2 52.7,75 52.4,75 52.4,81.8 50.4,81.8 50.4,86.2 52,86.2 52,93 50.4,93 50.4,95.2 53.2,95.2 53.2,102 52.7,102 52.7,106.5 52.7,106.5 52.7,111 51.6,111 51.6,115.5 52.7,115.5 52.7,117.8 52,117.8 52,120 52,120 52,124.5 52,124.5 52,126.8 52.4,126.8 52.4,131.2 43.9,131.2" fill="url(#bld)"/>
<polygon points="69.9,61.5 62.7,61.5 62.7,63.8 62.7,63.8 62.7,70.5 61.7,70.5 61.7,77.2 62.1,77.2 62.1,81.8 63.4,81.8 63.4,84 62.1,84 62.1,86.2 63.4,86.2 63.4,90.8 61.7,90.8 61.7,95.2 61.4,95.2 61.4,102 61.4,102 61.4,106.5 62.1,106.5 62.1,108.8 60.5,108.8 60.5,113.2 60.5,113.2 60.5,117.8 61.4,117.8 61.4,120 61.7,120 61.7,122.2 61.4,122.2 61.4,126.8 60.5,126.8 60.5,129 59.7,129 59.7,131.2 69.9,131.2" fill="url(#bld)"/>
<rect x="51.9" y="124.7" width="7" height="6.5" fill="url(#bldh)"/>
<polygon points="43.9,138.2 54,138.2 54,140.4 54,140.4 54,144.9 51.6,144.9 51.6,149.4 54,149.4 54,153.9 52,153.9 52,158.4 52,158.4 52,165.2 54,165.2 54,171.9 52.4,171.9 52.4,174.2 50.4,174.2 50.4,176.4 52,176.4 52,180.9 52,180.9 52,183.2 54,183.2 54,187.7 52.4,187.7 52.4,189.9 51.1,189.9 51.1,194.4 53.2,194.4 53.2,198.9 52,198.9 52,201.3 43.9,201.3" fill="url(#bld)"/>
<polygon points="69.9,138.2 61.4,138.2 61.4,142.7 61.4,142.7 61.4,147.2 62.1,147.2 62.1,149.4 62.1,149.4 62.1,151.7 60.5,151.7 60.5,153.9 61.4,153.9 61.4,156.2 60.5,156.2 60.5,162.9 63.4,162.9 63.4,165.2 60.5,165.2 60.5,169.7 62.1,169.7 62.1,171.9 61.1,171.9 61.1,174.2 60.5,174.2 60.5,176.4 61.1,176.4 61.1,180.9 62.1,180.9 62.1,185.4 60.5,185.4 60.5,189.9 62.1,189.9 62.1,192.2 61.7,192.2 61.7,194.4 62.7,194.4 62.7,196.7 63.4,196.7 63.4,201.2 61.7,201.2 61.7,201.3 69.9,201.3" fill="url(#bld)"/>
<polygon points="76.9,61.5 85.4,61.5 85.4,63.8 87.1,63.8 87.1,70.5 85.1,70.5 85.1,72.8 84.1,72.8 84.1,75 87.1,75 87.1,77.2 85.7,77.2 85.7,79.5 85.1,79.5 85.1,81.8 85.4,81.8 85.4,84 85.4,84 85.4,90.8 85.1,90.8 85.1,97.5 85.4,97.5 85.4,102 87.1,102 87.1,106.5 85.1,106.5 85.1,108.8 85.4,108.8 85.4,113.2 83.4,113.2 83.4,120 85.7,120 85.7,126.8 85.1,126.8 85.1,131.2 76.9,131.2" fill="url(#bld)"/>
<polygon points="103,61.5 94.8,61.5 94.8,68.2 92.8,68.2 92.8,70.5 93.6,70.5 93.6,72.8 96.5,72.8 96.5,75 94.8,75 94.8,77.2 94.8,77.2 94.8,81.8 96.5,81.8 96.5,84 92.8,84 92.8,86.2 94.5,86.2 94.5,93 92.8,93 92.8,99.8 93.6,99.8 93.6,102 92.8,102 92.8,104.2 94.8,104.2 94.8,106.5 94.5,106.5 94.5,108.8 95.2,108.8 95.2,115.5 93.6,115.5 93.6,122.2 95.8,122.2 95.8,124.5 93.6,124.5 93.6,129 96.5,129 96.5,131.2 103,131.2" fill="url(#bld)"/>
<rect x="86.9" y="127.2" width="9" height="4" fill="url(#bldh)"/>
<polygon points="76.9,138.2 86.3,138.2 86.3,144.9 87.1,144.9 87.1,149.4 87.1,149.4 87.1,151.7 87.1,151.7 87.1,156.2 87.1,156.2 87.1,158.4 86.3,158.4 86.3,160.7 85.7,160.7 85.7,162.9 85.7,162.9 85.7,167.4 85.4,167.4 85.4,169.7 85.1,169.7 85.1,174.2 84.7,174.2 84.7,176.4 85.4,176.4 85.4,178.7 85.1,178.7 85.1,183.2 85.1,183.2 85.1,187.7 85.1,187.7 85.1,192.2 85.1,192.2 85.1,194.4 85.7,194.4 85.7,198.9 85.1,198.9 85.1,201.2 85.1,201.2 85.1,201.3 76.9,201.3" fill="url(#bld)"/>
<polygon points="103,138.2 92.8,138.2 92.8,142.7 94.5,142.7 94.5,147.2 94.8,147.2 94.8,151.7 94.5,151.7 94.5,153.9 94.5,153.9 94.5,156.2 94.5,156.2 94.5,162.9 93.6,162.9 93.6,167.4 95.8,167.4 95.8,171.9 94.5,171.9 94.5,178.7 96.5,178.7 96.5,183.2 92.8,183.2 92.8,185.4 95.2,185.4 95.2,187.7 95.2,187.7 95.2,189.9 94.5,189.9 94.5,194.4 95.8,194.4 95.8,196.7 94.5,196.7 94.5,198.9 94.2,198.9 94.2,201.3 103,201.3" fill="url(#bld)"/>
<rect x="85.4" y="138.2" width="8" height="6.5" fill="url(#bldh)"/>
<rect x="84.9" y="194.8" width="7" height="6.5" fill="url(#bldh)"/>
<polygon points="110,61.5 118.5,61.5 118.5,63.8 118.2,63.8 118.2,68.2 117.8,68.2 117.8,72.8 117.2,72.8 117.2,75 118.5,75 118.5,77.2 116.5,77.2 116.5,79.5 117.8,79.5 117.8,84 117.8,84 117.8,88.5 117.2,88.5 117.2,93 120.2,93 120.2,97.5 118.5,97.5 118.5,104.2 118.2,104.2 118.2,106.5 120.2,106.5 120.2,108.8 117.8,108.8 117.8,111 118.5,111 118.5,113.2 118.2,113.2 118.2,115.5 118.5,115.5 118.5,120 120.2,120 120.2,122.2 118.5,122.2 118.5,126.8 120.2,126.8 120.2,129 118.5,129 118.5,131.2 110,131.2" fill="url(#bld)"/>
<polygon points="136,61.5 128.8,61.5 128.8,66 128.8,66 128.8,68.2 128.8,68.2 128.8,75 125.8,75 125.8,77.2 125.8,77.2 125.8,81.8 127.8,81.8 127.8,86.2 128.2,86.2 128.2,90.8 126.6,90.8 126.6,97.5 127.2,97.5 127.2,104.2 127.5,104.2 127.5,106.5 127.8,106.5 127.8,111 127.8,111 127.8,113.2 127.2,113.2 127.2,117.8 128.8,117.8 128.8,120 128.8,120 128.8,122.2 127.5,122.2 127.5,126.8 127.8,126.8 127.8,129 128.2,129 128.2,131.2 136,131.2" fill="url(#bld)"/>
<polygon points="110,138.2 118.5,138.2 118.5,144.9 118.2,144.9 118.2,149.4 117.2,149.4 117.2,153.9 118.2,153.9 118.2,156.2 118.5,156.2 118.5,160.7 117.2,160.7 117.2,165.2 118.5,165.2 118.5,169.7 120.2,169.7 120.2,174.2 118.2,174.2 118.2,176.4 118.5,176.4 118.5,178.7 118.5,178.7 118.5,180.9 117.2,180.9 117.2,185.4 118.8,185.4 118.8,187.7 119.4,187.7 119.4,192.2 120.2,192.2 120.2,194.4 118.2,194.4 118.2,201.2 117.2,201.2 117.2,201.3 110,201.3" fill="url(#bld)"/>
<polygon points="136,138.2 127.5,138.2 127.5,140.4 127.8,140.4 127.8,144.9 129.5,144.9 129.5,147.2 127.2,147.2 127.2,149.4 127.5,149.4 127.5,153.9 127.8,153.9 127.8,156.2 129.5,156.2 129.5,162.9 127.8,162.9 127.8,169.7 127.2,169.7 127.2,174.2 126.6,174.2 126.6,176.4 127.5,176.4 127.5,183.2 127.8,183.2 127.8,185.4 125.8,185.4 125.8,189.9 125.8,189.9 125.8,192.2 125.8,192.2 125.8,198.9 129.5,198.9 129.5,201.2 129.5,201.2 129.5,201.3 136,201.3" fill="url(#bld)"/>
<rect x="118.5" y="138.2" width="4" height="4" fill="url(#bldh)"/>
<rect x="120" y="197.3" width="7" height="4" fill="url(#bldh)"/>
<polygon points="143,61.5 153.2,61.5 153.2,63.8 150.2,63.8 150.2,70.5 151.2,70.5 151.2,75 151.5,75 151.5,77.2 152.4,77.2 152.4,79.5 153.2,79.5 153.2,86.2 150.8,86.2 150.8,93 150.8,93 150.8,97.5 151.5,97.5 151.5,99.8 151.5,99.8 151.5,102 151.2,102 151.2,104.2 152.4,104.2 152.4,108.8 151.8,108.8 151.8,111 152.4,111 152.4,115.5 150.2,115.5 150.2,122.2 151.2,122.2 151.2,124.5 149.5,124.5 149.5,126.8 151.5,126.8 151.5,131.2 143,131.2" fill="url(#bld)"/>
<polygon points="169.1,61.5 160.6,61.5 160.6,68.2 162.6,68.2 162.6,70.5 161.9,70.5 161.9,75 161.9,75 161.9,79.5 160.6,79.5 160.6,81.8 160.9,81.8 160.9,86.2 160.6,86.2 160.6,93 160.6,93 160.6,97.5 159.7,97.5 159.7,102 161.3,102 161.3,108.8 160.9,108.8 160.9,113.2 161.3,113.2 161.3,117.8 161.9,117.8 161.9,122.2 159.7,122.2 159.7,124.5 158.9,124.5 158.9,129 160.6,129 160.6,131.2 169.1,131.2" fill="url(#bld)"/>
<rect x="151" y="127.2" width="5" height="4" fill="url(#bldh)"/>
<polygon points="143,138.2 151.2,138.2 151.2,144.9 151.5,144.9 151.5,149.4 151.2,149.4 151.2,156.2 153.2,156.2 153.2,160.7 150.8,160.7 150.8,165.2 151.2,165.2 151.2,169.7 152.4,169.7 152.4,174.2 150.2,174.2 150.2,176.4 150.2,176.4 150.2,180.9 152.4,180.9 152.4,185.4 151.5,185.4 151.5,187.7 151.8,187.7 151.8,192.2 151.8,192.2 151.8,196.7 150.8,196.7 150.8,201.2 150.2,201.2 150.2,201.3 143,201.3" fill="url(#bld)"/>
<polygon points="169.1,138.2 160.6,138.2 160.6,142.7 161.3,142.7 161.3,144.9 161.9,144.9 161.9,149.4 160.6,149.4 160.6,153.9 161.3,153.9 161.3,158.4 160.3,158.4 160.3,165.2 161.3,165.2 161.3,169.7 160.3,169.7 160.3,174.2 161.9,174.2 161.9,178.7 161.3,178.7 161.3,180.9 160.6,180.9 160.6,183.2 160.9,183.2 160.9,187.7 160.3,187.7 160.3,194.4 160.6,194.4 160.6,196.7 160.6,196.7 160.6,201.2 161.9,201.2 161.9,201.3 169.1,201.3" fill="url(#bld)"/>
<polygon points="176.1,61.5 186.3,61.5 186.3,63.8 183.9,63.8 183.9,66 184.9,66 184.9,70.5 182.6,70.5 182.6,72.8 184.6,72.8 184.6,77.2 183.3,77.2 183.3,84 184.3,84 184.3,86.2 185.5,86.2 185.5,90.8 184.6,90.8 184.6,95.2 184.6,95.2 184.6,99.8 184.6,99.8 184.6,104.2 184.3,104.2 184.3,108.8 185.5,108.8 185.5,115.5 184.9,115.5 184.9,117.8 184.3,117.8 184.3,120 183.9,120 183.9,122.2 186.3,122.2 186.3,126.8 186.3,126.8 186.3,129 185.5,129 185.5,131.2 176.1,131.2" fill="url(#bld)"/>
<polygon points="202.2,61.5 192.8,61.5 192.8,66 194,66 194,72.8 194,72.8 194,75 194.3,75 194.3,77.2 193.7,77.2 193.7,84 194.3,84 194.3,88.5 194,88.5 194,93 193.7,93 193.7,99.8 194,99.8 194,102 193.3,102 193.3,106.5 193.3,106.5 193.3,113.2 194,113.2 194,117.8 193.7,117.8 193.7,122.2 195,122.2 195,126.8 193.7,126.8 193.7,131.2 202.2,131.2" fill="url(#bld)"/>
<polygon points="176.1,138.2 184.3,138.2 184.3,144.9 186.3,144.9 186.3,147.2 183.9,147.2 183.9,151.7 184.3,151.7 184.3,156.2 184.9,156.2 184.9,160.7 184.9,160.7 184.9,165.2 183.3,165.2 183.3,167.4 183.3,167.4 183.3,171.9 185.5,171.9 185.5,178.7 185.5,178.7 185.5,180.9 183.9,180.9 183.9,185.4 186.3,185.4 186.3,189.9 185.5,189.9 185.5,192.2 183.9,192.2 183.9,194.4 184.3,194.4 184.3,196.7 186.3,196.7 186.3,198.9 185.5,198.9 185.5,201.2 186.3,201.2 186.3,201.3 176.1,201.3" fill="url(#bld)"/>
<polygon points="202.2,138.2 195,138.2 195,140.4 194,140.4 194,147.2 195,147.2 195,151.7 194,151.7 194,156.2 192,156.2 192,160.7 194.3,160.7 194.3,162.9 194.3,162.9 194.3,167.4 192,167.4 192,174.2 194,174.2 194,178.7 193.7,178.7 193.7,180.9 195.7,180.9 195.7,183.2 195,183.2 195,189.9 193.7,189.9 193.7,194.4 193.7,194.4 193.7,198.9 194,198.9 194,201.3 202.2,201.3" fill="url(#bld)"/>
<rect x="184.6" y="138.2" width="8" height="4" fill="url(#bldh)"/>
<rect x="186.1" y="196.3" width="9" height="5" fill="url(#bldh)"/>
<polygon points="209.2,61.5 216.3,61.5 216.3,63.8 217.3,63.8 217.3,68.2 218,68.2 218,70.5 217.7,70.5 217.7,72.8 218,72.8 218,77.2 217.3,77.2 217.3,81.8 216.3,81.8 216.3,86.2 218,86.2 218,90.8 218,90.8 218,93 216.3,93 216.3,97.5 219.3,97.5 219.3,99.8 217.3,99.8 217.3,104.2 217.3,104.2 217.3,108.8 217.3,108.8 217.3,111 218.6,111 218.6,113.2 217.7,113.2 217.7,117.8 217,117.8 217,124.5 218.6,124.5 218.6,131.2 209.2,131.2" fill="url(#bld)"/>
<polygon points="235.2,61.5 227,61.5 227,63.8 225.8,63.8 225.8,68.2 228,68.2 228,75 227,75 227,79.5 228,79.5 228,81.8 228,81.8 228,88.5 227,88.5 227,93 228,93 228,95.2 227,95.2 227,99.8 225.8,99.8 225.8,104.2 227.4,104.2 227.4,106.5 227,106.5 227,111 227,111 227,113.2 225,113.2 225,117.8 228,117.8 228,122.2 226.4,122.2 226.4,126.8 226.7,126.8 226.7,131.2 235.2,131.2" fill="url(#bld)"/>
<rect x="219.2" y="127.2" width="5" height="4" fill="url(#bldh)"/>
<polygon points="209.2,138.2 217,138.2 217,142.7 218,142.7 218,144.9 219.3,144.9 219.3,147.2 218,147.2 218,151.7 217.7,151.7 217.7,156.2 217,156.2 217,158.4 218.6,158.4 218.6,160.7 217.7,160.7 217.7,167.4 218.6,167.4 218.6,169.7 217.7,169.7 217.7,174.2 218.6,174.2 218.6,176.4 218,176.4 218,178.7 218,178.7 218,180.9 218,180.9 218,183.2 218.6,183.2 218.6,185.4 216.3,185.4 216.3,189.9 217.3,189.9 217.3,192.2 215.7,192.2 215.7,196.7 217.7,196.7 217.7,201.2 217.7,201.2 217.7,201.3 209.2,201.3" fill="url(#bld)"/>
<polygon points="235.2,138.2 228,138.2 228,142.7 226.7,142.7 226.7,147.2 226.7,147.2 226.7,149.4 228.7,149.4 228.7,151.7 228,151.7 228,153.9 227.4,153.9 227.4,158.4 225.8,158.4 225.8,162.9 226.7,162.9 226.7,167.4 225.8,167.4 225.8,169.7 225.8,169.7 225.8,171.9 228,171.9 228,176.4 227,176.4 227,183.2 227,183.2 227,187.7 226.7,187.7 226.7,192.2 226.7,192.2 226.7,198.9 227.4,198.9 227.4,201.3 235.2,201.3" fill="url(#bld)"/>
<rect x="217.7" y="138.2" width="4" height="4" fill="url(#bldh)"/>
<rect x="219.2" y="194.8" width="5" height="6.5" fill="url(#bldh)"/>
<polygon points="242.2,61.5 252.4,61.5 252.4,68.2 250.7,68.2 250.7,70.5 251,70.5 251,72.8 250,72.8 250,77.2 248.7,77.2 248.7,79.5 250.4,79.5 250.4,81.8 251,81.8 251,86.2 251.6,86.2 251.6,88.5 250.4,88.5 250.4,90.8 251,90.8 251,95.2 248.7,95.2 248.7,97.5 252.4,97.5 252.4,99.8 250.7,99.8 250.7,104.2 250.7,104.2 250.7,111 250.7,111 250.7,115.5 250.7,115.5 250.7,120 250.4,120 250.4,124.5 250.4,124.5 250.4,126.8 250.4,126.8 250.4,129 250.4,129 250.4,131.2 242.2,131.2" fill="url(#bld)"/>
<polygon points="268.3,61.5 261.8,61.5 261.8,63.8 259.8,63.8 259.8,66 259.5,66 259.5,70.5 260.1,70.5 260.1,77.2 258.1,77.2 258.1,79.5 260.5,79.5 260.5,84 261.1,84 261.1,86.2 261.1,86.2 261.1,90.8 260.1,90.8 260.1,95.2 259.8,95.2 259.8,97.5 259.8,97.5 259.8,99.8 260.5,99.8 260.5,102 260.1,102 260.1,108.8 261.8,108.8 261.8,111 260.5,111 260.5,115.5 258.1,115.5 258.1,117.8 258.9,117.8 258.9,124.5 259.8,124.5 259.8,126.8 260.5,126.8 260.5,131.2 268.3,131.2" fill="url(#bld)"/>
<rect x="250.2" y="126.2" width="5" height="5" fill="url(#bldh)"/>
<polygon points="242.2,138.2 250.7,138.2 250.7,142.7 250.4,142.7 250.4,144.9 250.4,144.9 250.4,149.4 249.4,149.4 249.4,156.2 250.4,156.2 250.4,158.4 250.7,158.4 250.7,162.9 250.7,162.9 250.7,165.2 248.7,165.2 248.7,169.7 250,169.7 250,171.9 249.4,171.9 249.4,176.4 252.4,176.4 252.4,180.9 250,180.9 250,185.4 250,185.4 250,189.9 252.4,189.9 252.4,192.2 252.4,192.2 252.4,194.4 250.4,194.4 250.4,198.9 250.7,198.9 250.7,201.3 242.2,201.3" fill="url(#bld)"/>
<polygon points="268.3,138.2 259.8,138.2 259.8,142.7 259.5,142.7 259.5,144.9 259.8,144.9 259.8,151.7 259.8,151.7 259.8,156.2 259.5,156.2 259.5,158.4 259.8,158.4 259.8,160.7 259.5,160.7 259.5,165.2 260.1,165.2 260.1,167.4 259.5,167.4 259.5,169.7 259.5,169.7 259.5,171.9 260.5,171.9 260.5,176.4 261.8,176.4 261.8,180.9 258.9,180.9 258.9,183.2 260.1,183.2 260.1,185.4 261.1,185.4 261.1,192.2 260.1,192.2 260.1,196.7 260.5,196.7 260.5,201.3 268.3,201.3" fill="url(#bld)"/>
<rect x="250.7" y="138.2" width="6" height="6.5" fill="url(#bldh)"/>
<rect x="252.2" y="197.3" width="7" height="4" fill="url(#bldh)"/>
<polygon points="275.3,61.5 283.5,61.5 283.5,68.2 283.5,68.2 283.5,70.5 283.1,70.5 283.1,75 284.7,75 284.7,77.2 283.8,77.2 283.8,79.5 282.5,79.5 282.5,84 283.8,84 283.8,86.2 281.8,86.2 281.8,90.8 283.1,90.8 283.1,97.5 283.5,97.5 283.5,99.8 281.8,99.8 281.8,104.2 281.8,104.2 281.8,106.5 284.7,106.5 284.7,108.8 281.8,108.8 281.8,111 282.5,111 282.5,115.5 285.5,115.5 285.5,117.8 284.1,117.8 284.1,122.2 283.1,122.2 283.1,124.5 283.5,124.5 283.5,126.8 282.5,126.8 282.5,131.2 275.3,131.2" fill="url(#bld)"/>
<polygon points="301.3,61.5 294.1,61.5 294.1,66 293.5,66 293.5,70.5 294.8,70.5 294.8,75 291.1,75 291.1,79.5 292.5,79.5 292.5,84 294.8,84 294.8,86.2 292.5,86.2 292.5,90.8 292.8,90.8 292.8,95.2 291.1,95.2 291.1,99.8 293.1,99.8 293.1,102 294.1,102 294.1,108.8 291.9,108.8 291.9,113.2 293.1,113.2 293.1,117.8 294.8,117.8 294.8,122.2 293.1,122.2 293.1,126.8 292.5,126.8 292.5,129 293.5,129 293.5,131.2 301.3,131.2" fill="url(#bld)"/>
<rect x="285.3" y="126.2" width="5" height="5" fill="url(#bldh)"/>
<polygon points="275.3,138.2 285.5,138.2 285.5,144.9 282.5,144.9 282.5,147.2 283.5,147.2 283.5,149.4 283.8,149.4 283.8,156.2 283.1,156.2 283.1,158.4 285.5,158.4 285.5,162.9 283.5,162.9 283.5,165.2 283.1,165.2 283.1,171.9 283.1,171.9 283.1,174.2 283.5,174.2 283.5,178.7 283.8,178.7 283.8,180.9 283.5,180.9 283.5,183.2 283.8,183.2 283.8,189.9 283.8,189.9 283.8,192.2 283.8,192.2 283.8,198.9 283.8,198.9 283.8,201.3 275.3,201.3" fill="url(#bld)"/>
<polygon points="301.3,138.2 293.1,138.2 293.1,142.7 291.1,142.7 291.1,147.2 293.1,147.2 293.1,153.9 292.8,153.9 292.8,160.7 291.1,160.7 291.1,162.9 292.8,162.9 292.8,167.4 294.1,167.4 294.1,169.7 293.1,169.7 293.1,174.2 293.1,174.2 293.1,178.7 292.8,178.7 292.8,183.2 293.1,183.2 293.1,187.7 293.5,187.7 293.5,194.4 294.1,194.4 294.1,198.9 291.9,198.9 291.9,201.3 301.3,201.3" fill="url(#bld)"/>
<rect x="283.8" y="138.2" width="8" height="4" fill="url(#bldh)"/>
<rect x="285.3" y="194.8" width="9" height="6.5" fill="url(#bldh)"/>
<polygon points="308.3,61.5 316.8,61.5 316.8,66 317.1,66 317.1,70.5 314.8,70.5 314.8,72.8 316.8,72.8 316.8,77.2 316.1,77.2 316.1,81.8 316.5,81.8 316.5,84 314.8,84 314.8,86.2 316.8,86.2 316.8,93 316.8,93 316.8,97.5 314.8,97.5 314.8,102 315.5,102 315.5,104.2 316.5,104.2 316.5,106.5 316.8,106.5 316.8,113.2 317.1,113.2 317.1,117.8 318.5,117.8 318.5,122.2 315.5,122.2 315.5,124.5 317.7,124.5 317.7,126.8 314.8,126.8 314.8,129 315.5,129 315.5,131.2 308.3,131.2" fill="url(#bld)"/>
<polygon points="334.4,61.5 327.2,61.5 327.2,68.2 325.9,68.2 325.9,72.8 326.6,72.8 326.6,79.5 325.9,79.5 325.9,86.2 326.2,86.2 326.2,90.8 327.9,90.8 327.9,95.2 327.9,95.2 327.9,97.5 326.2,97.5 326.2,102 327.9,102 327.9,106.5 326.2,106.5 326.2,108.8 327.2,108.8 327.2,111 326.2,111 326.2,115.5 326.6,115.5 326.6,117.8 326.2,117.8 326.2,122.2 325.6,122.2 325.6,126.8 327.2,126.8 327.2,129 324.2,129 324.2,131.2 334.4,131.2" fill="url(#bld)"/>
<rect x="318.3" y="124.7" width="7" height="6.5" fill="url(#bldh)"/>
<polygon points="308.3,138.2 316.5,138.2 316.5,140.4 315.5,140.4 315.5,142.7 315.5,142.7 315.5,149.4 315.5,149.4 315.5,153.9 316.5,153.9 316.5,156.2 316.5,156.2 316.5,158.4 316.1,158.4 316.1,160.7 314.8,160.7 314.8,167.4 316.5,167.4 316.5,169.7 317.1,169.7 317.1,171.9 318.5,171.9 318.5,178.7 318.5,178.7 318.5,183.2 314.8,183.2 314.8,185.4 318.5,185.4 318.5,189.9 316.1,189.9 316.1,194.4 315.5,194.4 315.5,198.9 318.5,198.9 318.5,201.2 317.1,201.2 317.1,201.3 308.3,201.3" fill="url(#bld)"/>
<polygon points="334.4,138.2 325,138.2 325,140.4 325,140.4 325,142.7 326.2,142.7 326.2,144.9 325.9,144.9 325.9,147.2 327.2,147.2 327.2,149.4 325.9,149.4 325.9,153.9 327.2,153.9 327.2,158.4 324.2,158.4 324.2,162.9 324.2,162.9 324.2,167.4 325.9,167.4 325.9,169.7 326.6,169.7 326.6,176.4 327.2,176.4 327.2,178.7 325.9,178.7 325.9,180.9 326.2,180.9 326.2,183.2 325.9,183.2 325.9,185.4 325.6,185.4 325.6,189.9 327.9,189.9 327.9,192.2 325.6,192.2 325.6,198.9 325,198.9 325,201.3 334.4,201.3" fill="url(#bld)"/>
<rect x="316.3" y="197.3" width="7" height="4" fill="url(#bldh)"/>
<polygon points="341.4,61.5 347.9,61.5 347.9,66 349.6,66 349.6,70.5 347.9,70.5 347.9,77.2 349.2,77.2 349.2,84 349.6,84 349.6,86.2 348.6,86.2 348.6,88.5 349.2,88.5 349.2,90.8 347.9,90.8 347.9,93 349.9,93 349.9,95.2 348.6,95.2 348.6,97.5 348.6,97.5 348.6,99.8 348.6,99.8 348.6,102 348.6,102 348.6,104.2 347.9,104.2 347.9,108.8 349.6,108.8 349.6,115.5 349.2,115.5 349.2,120 349.2,120 349.2,122.2 349.6,122.2 349.6,124.5 349.2,124.5 349.2,126.8 348.6,126.8 348.6,129 349.9,129 349.9,131.2 341.4,131.2" fill="url(#bld)"/>
<polygon points="367.5,61.5 359.7,61.5 359.7,63.8 359.7,63.8 359.7,66 359,66 359,70.5 359,70.5 359,75 359,75 359,77.2 359,77.2 359,81.8 359,81.8 359,84 359,84 359,88.5 361,88.5 361,95.2 358.1,95.2 358.1,99.8 361,99.8 361,102 358.7,102 358.7,104.2 358.7,104.2 358.7,111 359.7,111 359.7,115.5 358.1,115.5 358.1,117.8 357.3,117.8 357.3,124.5 359.3,124.5 359.3,126.8 361,126.8 361,131.2 367.5,131.2" fill="url(#bld)"/>
<rect x="349.4" y="127.2" width="9" height="4" fill="url(#bldh)"/>
<polygon points="341.4,138.2 349.9,138.2 349.9,140.4 348.6,140.4 348.6,144.9 350.8,144.9 350.8,147.2 350.8,147.2 350.8,149.4 350.8,149.4 350.8,156.2 349.9,156.2 349.9,162.9 349.9,162.9 349.9,169.7 349.6,169.7 349.6,174.2 349.6,174.2 349.6,176.4 350.8,176.4 350.8,178.7 349.2,178.7 349.2,180.9 350.8,180.9 350.8,187.7 349.2,187.7 349.2,192.2 349.9,192.2 349.9,194.4 350.2,194.4 350.2,198.9 349.2,198.9 349.2,201.3 341.4,201.3" fill="url(#bld)"/>
<polygon points="367.5,138.2 360.3,138.2 360.3,142.7 359.3,142.7 359.3,147.2 359,147.2 359,151.7 357.3,151.7 357.3,158.4 359.3,158.4 359.3,162.9 359.3,162.9 359.3,167.4 359.3,167.4 359.3,174.2 361,174.2 361,180.9 360.3,180.9 360.3,185.4 361,185.4 361,189.9 357.3,189.9 357.3,192.2 358.1,192.2 358.1,198.9 359,198.9 359,201.2 358.1,201.2 358.1,201.3 367.5,201.3" fill="url(#bld)"/>
<rect x="349.9" y="138.2" width="6" height="6.5" fill="url(#bldh)"/>
<rect x="349.4" y="196.3" width="7" height="5" fill="url(#bldh)"/>
<polygon points="374.5,61.5 384.7,61.5 384.7,63.8 383,63.8 383,68.2 381,68.2 381,70.5 382.7,70.5 382.7,72.8 383,72.8 383,79.5 384.7,79.5 384.7,84 382.7,84 382.7,86.2 383,86.2 383,88.5 383,88.5 383,90.8 382.7,90.8 382.7,93 382.7,93 382.7,97.5 382.7,97.5 382.7,99.8 383,99.8 383,104.2 383.3,104.2 383.3,108.8 382.7,108.8 382.7,111 382.3,111 382.3,115.5 382.7,115.5 382.7,120 383.9,120 383.9,122.2 381.7,122.2 381.7,126.8 383.3,126.8 383.3,129 384.7,129 384.7,131.2 374.5,131.2" fill="url(#bld)"/>
<polygon points="400.5,61.5 391.1,61.5 391.1,63.8 392.3,63.8 392.3,68.2 394,68.2 394,72.8 393.3,72.8 393.3,75 391.7,75 391.7,81.8 394,81.8 394,86.2 392.3,86.2 392.3,93 392.3,93 392.3,95.2 392.7,95.2 392.7,99.8 391.7,99.8 391.7,104.2 392,104.2 392,106.5 391.7,106.5 391.7,108.8 391.7,108.8 391.7,111 392,111 392,115.5 391.1,115.5 391.1,120 393.3,120 393.3,126.8 391.7,126.8 391.7,131.2 400.5,131.2" fill="url(#bld)"/>
<rect x="384.5" y="127.2" width="9" height="4" fill="url(#bldh)"/>
<polygon points="374.5,138.2 381.7,138.2 381.7,142.7 383.9,142.7 383.9,144.9 381.7,144.9 381.7,149.4 384.7,149.4 384.7,151.7 382.7,151.7 382.7,153.9 384.7,153.9 384.7,158.4 382.3,158.4 382.3,165.2 383.9,165.2 383.9,171.9 382.7,171.9 382.7,176.4 384.7,176.4 384.7,178.7 383,178.7 383,185.4 383,185.4 383,189.9 383.9,189.9 383.9,192.2 382.7,192.2 382.7,196.7 384.7,196.7 384.7,198.9 381,198.9 381,201.3 374.5,201.3" fill="url(#bld)"/>
<polygon points="400.5,138.2 393.3,138.2 393.3,142.7 392,142.7 392,147.2 391.7,147.2 391.7,149.4 393.3,149.4 393.3,151.7 391.7,151.7 391.7,156.2 392,156.2 392,162.9 392,162.9 392,165.2 392.3,165.2 392.3,169.7 391.7,169.7 391.7,176.4 392.3,176.4 392.3,180.9 391.1,180.9 391.1,183.2 392.3,183.2 392.3,185.4 392.7,185.4 392.7,187.7 391.1,187.7 391.1,194.4 392.3,194.4 392.3,196.7 392,196.7 392,201.2 391.1,201.2 391.1,201.3 400.5,201.3" fill="url(#bld)"/>
<rect x="382.5" y="196.3" width="7" height="5" fill="url(#bldh)"/>
<polygon points="407.5,61.5 416,61.5 416,66 416,66 416,70.5 415.7,70.5 415.7,75 414.7,75 414.7,79.5 416,79.5 416,81.8 416,81.8 416,86.2 416.9,86.2 416.9,90.8 416.3,90.8 416.3,97.5 415.3,97.5 415.3,102 415.7,102 415.7,106.5 416.3,106.5 416.3,108.8 415.3,108.8 415.3,115.5 416,115.5 416,117.8 417.7,117.8 417.7,122.2 414,122.2 414,124.5 414.7,124.5 414.7,126.8 415.3,126.8 415.3,131.2 407.5,131.2" fill="url(#bld)"/>
<polygon points="433.6,61.5 425.1,61.5 425.1,68.2 425.8,68.2 425.8,75 425.4,75 425.4,77.2 425.4,77.2 425.4,81.8 425.1,81.8 425.1,84 425.4,84 425.4,88.5 423.4,88.5 423.4,90.8 427.1,90.8 427.1,97.5 425.8,97.5 425.8,104.2 425.1,104.2 425.1,106.5 424.2,106.5 424.2,108.8 423.4,108.8 423.4,111 424.2,111 424.2,113.2 423.4,113.2 423.4,115.5 425.1,115.5 425.1,120 425.4,120 425.4,122.2 424.2,122.2 424.2,126.8 423.4,126.8 423.4,129 424.2,129 424.2,131.2 433.6,131.2" fill="url(#bld)"/>
<polygon points="407.5,138.2 416.9,138.2 416.9,140.4 416.9,140.4 416.9,142.7 417.7,142.7 417.7,149.4 414.7,149.4 414.7,151.7 416,151.7 416,156.2 414,156.2 414,160.7 416,160.7 416,165.2 416,165.2 416,169.7 416.3,169.7 416.3,171.9 415.7,171.9 415.7,176.4 414.7,176.4 414.7,178.7 414,178.7 414,180.9 416,180.9 416,183.2 417.7,183.2 417.7,187.7 416.9,187.7 416.9,189.9 414.7,189.9 414.7,192.2 416.3,192.2 416.3,194.4 416,194.4 416,196.7 416,196.7 416,201.2 416.9,201.2 416.9,201.3 407.5,201.3" fill="url(#bld)"/>
<polygon points="433.6,138.2 423.4,138.2 423.4,140.4 425.1,140.4 425.1,144.9 425.1,144.9 425.1,149.4 425.1,149.4 425.1,156.2 426.4,156.2 426.4,160.7 425.1,160.7 425.1,165.2 424.2,165.2 424.2,169.7 425.1,169.7 425.1,176.4 425.1,176.4 425.1,183.2 425.1,183.2 425.1,185.4 424.2,185.4 424.2,187.7 425.1,187.7 425.1,189.9 425.1,189.9 425.1,194.4 425.4,194.4 425.4,201.2 425.8,201.2 425.8,201.3 433.6,201.3" fill="url(#bld)"/>
<rect x="416" y="138.2" width="8" height="5" fill="url(#bldh)"/>
<rect x="417.5" y="197.3" width="7" height="4" fill="url(#bldh)"/>
<polygon points="440.6,61.5 448.4,61.5 448.4,63.8 447.8,63.8 447.8,66 450,66 450,72.8 447.8,72.8 447.8,79.5 450.8,79.5 450.8,86.2 449.4,86.2 449.4,93 448.8,93 448.8,99.8 448.4,99.8 448.4,102 447.8,102 447.8,106.5 448.8,106.5 448.8,108.8 448.8,108.8 448.8,111 449.4,111 449.4,113.2 447.8,113.2 447.8,117.8 448.8,117.8 448.8,122.2 450.8,122.2 450.8,126.8 449.1,126.8 449.1,129 449.4,129 449.4,131.2 440.6,131.2" fill="url(#bld)"/>
<polygon points="466.6,61.5 458.1,61.5 458.1,63.8 457.8,63.8 457.8,70.5 460.1,70.5 460.1,72.8 457.2,72.8 457.2,79.5 456.4,79.5 456.4,81.8 458.8,81.8 458.8,86.2 460.1,86.2 460.1,90.8 457.2,90.8 457.2,93 459.4,93 459.4,97.5 460.1,97.5 460.1,104.2 458.4,104.2 458.4,108.8 457.8,108.8 457.8,115.5 458.8,115.5 458.8,117.8 457.2,117.8 457.2,120 458.4,120 458.4,122.2 457.8,122.2 457.8,124.5 459.4,124.5 459.4,126.8 458.8,126.8 458.8,129 458.8,129 458.8,131.2 466.6,131.2" fill="url(#bld)"/>
<rect x="448.6" y="126.2" width="9" height="5" fill="url(#bldh)"/>
<polygon points="440.6,138.2 450,138.2 450,140.4 447.8,140.4 447.8,144.9 448.8,144.9 448.8,147.2 449.1,147.2 449.1,153.9 450,153.9 450,158.4 449.1,158.4 449.1,160.7 447.8,160.7 447.8,162.9 447.8,162.9 447.8,165.2 447.1,165.2 447.1,167.4 449.4,167.4 449.4,171.9 449.1,171.9 449.1,178.7 448.8,178.7 448.8,183.2 447.1,183.2 447.1,185.4 449.1,185.4 449.1,189.9 447.1,189.9 447.1,194.4 450,194.4 450,196.7 448.8,196.7 448.8,198.9 449.1,198.9 449.1,201.2 449.4,201.2 449.4,201.3 440.6,201.3" fill="url(#bld)"/>
<polygon points="466.6,138.2 457.8,138.2 457.8,142.7 458.1,142.7 458.1,149.4 458.1,149.4 458.1,153.9 458.1,153.9 458.1,156.2 460.1,156.2 460.1,162.9 458.1,162.9 458.1,169.7 459.4,169.7 459.4,171.9 460.1,171.9 460.1,176.4 460.1,176.4 460.1,180.9 458.4,180.9 458.4,185.4 457.8,185.4 457.8,189.9 460.1,189.9 460.1,192.2 457.2,192.2 457.2,196.7 459.4,196.7 459.4,201.2 458.1,201.2 458.1,201.3 466.6,201.3" fill="url(#bld)"/>
<rect x="449.1" y="138.2" width="8" height="4" fill="url(#bldh)"/>
<rect x="448.6" y="197.3" width="9" height="4" fill="url(#bldh)"/>
<polygon points="473.6,61.5 482.1,61.5 482.1,68.2 483,68.2 483,72.8 483.8,72.8 483.8,75 483.8,75 483.8,81.8 483,81.8 483,86.2 481.8,86.2 481.8,88.5 482.1,88.5 482.1,95.2 480.8,95.2 480.8,99.8 483,99.8 483,102 482.1,102 482.1,108.8 480.8,108.8 480.8,113.2 483,113.2 483,120 481.4,120 481.4,126.8 482.1,126.8 482.1,129 481.8,129 481.8,131.2 473.6,131.2" fill="url(#bld)"/>
<polygon points="499.7,61.5 493.2,61.5 493.2,68.2 491.2,68.2 491.2,75 491.2,75 491.2,79.5 489.5,79.5 489.5,86.2 491.5,86.2 491.5,88.5 491.5,88.5 491.5,90.8 491.9,90.8 491.9,93 491.2,93 491.2,97.5 493.2,97.5 493.2,104.2 491.2,104.2 491.2,108.8 489.5,108.8 489.5,111 491.5,111 491.5,113.2 490.3,113.2 490.3,117.8 491.9,117.8 491.9,122.2 490.3,122.2 490.3,124.5 491.5,124.5 491.5,129 493.2,129 493.2,131.2 499.7,131.2" fill="url(#bld)"/>
<rect x="481.6" y="124.7" width="9" height="6.5" fill="url(#bldh)"/>
<polygon points="473.6,138.2 481.4,138.2 481.4,140.4 481.8,140.4 481.8,147.2 483,147.2 483,153.9 480.1,153.9 480.1,156.2 482.1,156.2 482.1,160.7 482.4,160.7 482.4,162.9 483,162.9 483,169.7 480.1,169.7 480.1,171.9 482.1,171.9 482.1,174.2 482.1,174.2 482.1,176.4 481.8,176.4 481.8,180.9 481.4,180.9 481.4,183.2 480.8,183.2 480.8,185.4 483.8,185.4 483.8,189.9 483,189.9 483,194.4 481.4,194.4 481.4,201.2 482.4,201.2 482.4,201.3 473.6,201.3" fill="url(#bld)"/>
<polygon points="499.7,138.2 491.9,138.2 491.9,142.7 491.2,142.7 491.2,149.4 491.5,149.4 491.5,151.7 489.5,151.7 489.5,156.2 491.5,156.2 491.5,160.7 491.5,160.7 491.5,165.2 491.5,165.2 491.5,167.4 491.5,167.4 491.5,169.7 491.2,169.7 491.2,174.2 492.5,174.2 492.5,180.9 492.5,180.9 492.5,183.2 491.2,183.2 491.2,189.9 490.3,189.9 490.3,192.2 491.9,192.2 491.9,194.4 491.2,194.4 491.2,196.7 491.5,196.7 491.5,201.2 493.2,201.2 493.2,201.3 499.7,201.3" fill="url(#bld)"/>
<rect x="482.1" y="138.2" width="8" height="4" fill="url(#bldh)"/>
<rect x="483.6" y="196.3" width="7" height="5" fill="url(#bldh)"/>
<rect x="305.500" y="161" width="27.500" height="18" fill="#c8facc"/>
<rect x="308" y="166.500" width="19" height="10.500" fill="#a9dcc2"/>
<path d="M307 165.500 L320 163 L331 165 L328 170" fill="none" stroke="#f08a7c" stroke-width=".9" stroke-dasharray="1.3 1.500"/>
<rect x="218.500" y="100" width="8" height="27" fill="#ebe5de"/>
<rect x="38.7" y="60" width="3.3" height="146.8" fill="#fff"/>
<rect x="71.8" y="60" width="3.3" height="146.8" fill="#fff"/>
<rect x="104.8" y="60" width="3.3" height="146.8" fill="#fff"/>
<rect x="137.9" y="60" width="3.3" height="146.8" fill="#fff"/>
<rect x="170.9" y="60" width="3.3" height="146.8" fill="#fff"/>
<rect x="204" y="60" width="3.3" height="146.8" fill="#fff"/>
<rect x="237.1" y="60" width="3.3" height="146.8" fill="#fff"/>
<rect x="270.1" y="60" width="3.3" height="146.8" fill="#fff"/>
<rect x="303.2" y="60" width="3.3" height="146.8" fill="#fff"/>
<rect x="336.2" y="60" width="3.3" height="146.8" fill="#fff"/>
<rect x="369.3" y="60" width="3.3" height="146.8" fill="#fff"/>
<rect x="402.4" y="60" width="3.3" height="146.8" fill="#fff"/>
<rect x="435.4" y="60" width="3.3" height="146.8" fill="#fff"/>
<rect x="468.5" y="60" width="3.3" height="146.8" fill="#fff"/>
<rect x="-10" y="132.9" width="520" height="3.5" fill="#fff"/>
<rect x="-10" y="203.1" width="520" height="7.4" fill="#d9d6a0"/>
<rect x="-10" y="203.6" width="520" height="6.4" fill="#f6f6bb"/>
<text x="54" y="136.8" font-size="6.1" fill="#3c3c3c" stroke="#fff" stroke-width="1.4" paint-order="stroke" stroke-linejoin="round">Cabrillo Street</text>
<text x="235.5" y="136.8" font-size="6.1" fill="#3c3c3c" stroke="#fff" stroke-width="1.4" paint-order="stroke" stroke-linejoin="round">Cabrillo Street</text>
<text x="417" y="136.8" font-size="6.1" fill="#3c3c3c" stroke="#fff" stroke-width="1.4" paint-order="stroke" stroke-linejoin="round">Cabrillo Street</text>
<text x="85" y="209.2" font-size="6.9" fill="#3c3c3c" stroke="#f6f6bb" stroke-width="1.4" paint-order="stroke" stroke-linejoin="round">Fulton Street</text>
<text x="285" y="209.2" font-size="6.9" fill="#3c3c3c" stroke="#f6f6bb" stroke-width="1.4" paint-order="stroke" stroke-linejoin="round">Fulton Street</text>
<text x="10.5" y="209.2" font-size="6.9" fill="#3c3c3c" stroke="#f6f6bb" stroke-width="1.4" paint-order="stroke" stroke-linejoin="round">Street</text>
<text x="38.4" y="154.5" font-size="6.1" fill="#3c3c3c" stroke="#fff" stroke-width="1.4" paint-order="stroke" stroke-linejoin="round" transform="rotate(90 38.4 154.5)">47th Avenue</text>
<text x="104.5" y="153" font-size="6.1" fill="#3c3c3c" stroke="#fff" stroke-width="1.4" paint-order="stroke" stroke-linejoin="round" transform="rotate(90 104.5 153)">45th Avenue</text>
<text x="170.6" y="153" font-size="6.1" fill="#3c3c3c" stroke="#fff" stroke-width="1.4" paint-order="stroke" stroke-linejoin="round" transform="rotate(90 170.6 153)">43rd Avenue</text>
<text x="402" y="153" font-size="6.1" fill="#3c3c3c" stroke="#fff" stroke-width="1.4" paint-order="stroke" stroke-linejoin="round" transform="rotate(90 402 153)">36th Avenue</text>
<text x="468.1" y="152" font-size="6.1" fill="#3c3c3c" stroke="#fff" stroke-width="1.4" paint-order="stroke" stroke-linejoin="round" transform="rotate(90 468.1 152)">34th Avenue</text>
<text x="104.5" y="86" font-size="5.9" fill="#3c3c3c" stroke="#fff" stroke-width="1.4" paint-order="stroke" stroke-linejoin="round" transform="rotate(90 104.5 86)">45th Avenue</text>
<rect x="-10" y="205.6" width="249" height="1.8" fill="#f07c30"/>
</g>
<text x="39.5" y="268" font-size="5.9" fill="#3c3c3c" font-weight="400" font-style="normal" text-anchor="start" stroke="#fff" stroke-width="1.4" paint-order="stroke" stroke-linejoin="round" transform="rotate(-81 39.5 268)">47th Avenue</text>
<text x="19" y="294.5" font-size="5.9" fill="#3c3c3c" font-weight="400" font-style="normal" text-anchor="start" stroke="#fff" stroke-width="1.4" paint-order="stroke" stroke-linejoin="round" transform="rotate(56 19 294.5)">John F Kennedy Drive</text>
<text x="147.5" y="378.8" font-size="5.9" fill="#3c3c3c" font-weight="400" font-style="normal" text-anchor="start" stroke="#fff" stroke-width="1.4" paint-order="stroke" stroke-linejoin="round" transform="rotate(-17.5 147.5 378.8)">John F Kennedy Drive</text>
<text x="275" y="335" font-size="5.9" fill="#3c3c3c" font-weight="400" font-style="normal" text-anchor="start" stroke="#fff" stroke-width="1.4" paint-order="stroke" stroke-linejoin="round" transform="rotate(-20.5 275 335)">John F Kennedy Drive</text>
<text x="165" y="262" font-size="5.6" fill="#3c3c3c" font-weight="400" font-style="normal" text-anchor="start" stroke="#c8facc" stroke-width="1" paint-order="stroke" stroke-linejoin="round" transform="rotate(52 165 262)">Chain of Lakes Drive West</text>
<text x="209" y="251.2" font-size="5.9" fill="#3c3c3c" font-weight="400" font-style="normal" text-anchor="start" stroke="#fff" stroke-width="1.4" paint-order="stroke" stroke-linejoin="round" transform="rotate(50 209 251.2)">Chain of Lakes Drive East</text>
<text x="263.5" y="433" font-size="5.75" fill="#3c3c3c" font-weight="400" font-style="normal" text-anchor="start" stroke="#fff" stroke-width="1.4" paint-order="stroke" stroke-linejoin="round" transform="rotate(-78.5 263.5 433)">Chain of Lakes Drive East</text>
<text x="408.3" y="199" font-size="5.9" fill="#3c3c3c" font-weight="400" font-style="normal" text-anchor="start" stroke="#fff" stroke-width="1.4" paint-order="stroke" stroke-linejoin="round" transform="rotate(88 408.3 199)">36th Avenue</text>
<text x="443" y="404.5" font-size="5.9" fill="#3c3c3c" font-weight="400" font-style="normal" text-anchor="start" stroke="#fff" stroke-width="1.4" paint-order="stroke" stroke-linejoin="round" transform="rotate(7 443 404.5)">Middle Drive</text>
<text x="63.8" y="449" font-size="5.7" fill="#3c3c3c" font-weight="400" font-style="normal" text-anchor="start" stroke="#fff" stroke-width="1.4" paint-order="stroke" stroke-linejoin="round" transform="rotate(-9 63.8 449)">King Junior Drive</text>
<text x="161.5" y="444.5" font-size="5.7" fill="#3c3c3c" font-weight="400" font-style="normal" text-anchor="start" stroke="#fff" stroke-width="1.4" paint-order="stroke" stroke-linejoin="round" transform="rotate(12.6 161.5 444.5)">Martin Luther</text>
<text x="219" y="279" font-size="6.2" fill="#7fa8cc" font-weight="400" font-style="italic" text-anchor="middle" stroke="#aad3df" stroke-width="0.6" paint-order="stroke" stroke-linejoin="round">North</text>
<text x="219.5" y="286.2" font-size="6.2" fill="#7fa8cc" font-weight="400" font-style="italic" text-anchor="middle" stroke="#aad3df" stroke-width="0.6" paint-order="stroke" stroke-linejoin="round">Lake</text>
<text x="461" y="225" font-size="6.2" fill="#7fa8cc" font-weight="400" font-style="italic" text-anchor="middle" stroke="#aad3df" stroke-width="0.6" paint-order="stroke" stroke-linejoin="round">Spreckels</text>
<text x="461" y="232.2" font-size="6.2" fill="#7fa8cc" font-weight="400" font-style="italic" text-anchor="middle" stroke="#aad3df" stroke-width="0.6" paint-order="stroke" stroke-linejoin="round">Lake</text>
<text x="337.4" y="270" font-size="7.6" fill="#7a3348" font-weight="700" font-style="normal" text-anchor="middle" stroke="#c8facc" stroke-width="1" paint-order="stroke" stroke-linejoin="round">Bison</text>
<text x="337.4" y="279.5" font-size="7.6" fill="#7a3348" font-weight="700" font-style="normal" text-anchor="middle" stroke="#c8facc" stroke-width="1" paint-order="stroke" stroke-linejoin="round">Paddock</text>
<text x="123.8" y="341" font-size="6.6" fill="#2f8f3f" font-weight="400" font-style="normal" text-anchor="middle" stroke="#b5e3b5" stroke-width="0.8" paint-order="stroke" stroke-linejoin="round">Golden</text>
<text x="123.8" y="349" font-size="6.6" fill="#2f8f3f" font-weight="400" font-style="normal" text-anchor="middle" stroke="#b5e3b5" stroke-width="0.8" paint-order="stroke" stroke-linejoin="round">Gate Park</text>
<text x="123.8" y="357" font-size="6.6" fill="#2f8f3f" font-weight="400" font-style="normal" text-anchor="middle" stroke="#b5e3b5" stroke-width="0.8" paint-order="stroke" stroke-linejoin="round">Golf Course</text>
<text x="11" y="358" font-size="6" fill="#5a9e8a" font-weight="400" font-style="normal" text-anchor="start" stroke="#a8d9c1" stroke-width="0.5" paint-order="stroke" stroke-linejoin="round">haler</text>
<text x="11" y="365.5" font-size="6" fill="#5a9e8a" font-weight="400" font-style="normal" text-anchor="start" stroke="#a8d9c1" stroke-width="0.5" paint-order="stroke" stroke-linejoin="round">ty</text>
<text x="11" y="373" font-size="6" fill="#5a9e8a" font-weight="400" font-style="normal" text-anchor="start" stroke="#a8d9c1" stroke-width="0.5" paint-order="stroke" stroke-linejoin="round">s</text>
<text x="43.3" y="375.5" font-size="9.5" fill="#1a8fe0" font-weight="700" font-style="normal" text-anchor="middle" stroke="#dedede" stroke-width="0.4" paint-order="stroke" stroke-linejoin="round">P</text>
<g fill="#2f8f3f"><rect x="118.800" y="323" width=".9" height="10.500"/><path d="M119.700 323l3.600 1.300-3.600 1.500z"/><circle cx="125.600" cy="324.200" r="1.100"/><path d="M124.500 325.600l2.400.2.800 3.400-1 .3.800 4h-1l-1.200-3.600-1 3.600h-1l.9-4.600z"/><path d="M127 323l.5.200-2.200 3.600-.5-.3z"/></g>
<g stroke="#2f8f3f" stroke-width="1" fill="none"><path d="M186.4 228h6.400M185.8 230h7.600M188 228l-1.600 4.500M191.2 228l1.600 4.500"/></g>
<g stroke="#2f8f3f" stroke-width="1" fill="none"><path d="M400.3 251.5h6.400M399.7 253.5h7.600M401.9 251.5l-1.600 4.500M405.1 251.5l1.600 4.500"/></g>
<g stroke="#2f8f3f" stroke-width="1" fill="none"><path d="M303.8 447.5h6.400M303.2 449.5h7.600M305.4 447.5l-1.600 4.500M308.6 447.5l1.600 4.500"/></g>
<rect x="32.800" y="368" width="4" height="4.500" fill="#d9c9b9"/>
<path d="M40.500 359v5.500m-1.300-1.700l1.300 1.900 1.300-1.900" stroke="#444" stroke-width=".7" fill="none"/>
<rect x="39.7" y="127.4" width="3.6" height="3.6" fill="#1e88e5"/>
<rect x="102.7" y="117.3" width="3.6" height="3.6" fill="#1e88e5"/>
<rect x="98" y="123.2" width="3.6" height="3.6" fill="#1e88e5"/>
<rect x="62" y="200.2" width="3.6" height="3.6" fill="#1e88e5"/>
<rect x="80.8" y="204.4" width="3.6" height="3.6" fill="#1e88e5"/>
<rect x="160.4" y="194.2" width="3.6" height="3.6" fill="#1e88e5"/>
<rect x="179.7" y="198.5" width="3.6" height="3.6" fill="#1e88e5"/>
<rect x="259.1" y="188.4" width="3.6" height="3.6" fill="#1e88e5"/>
<rect x="279.6" y="193.1" width="3.6" height="3.6" fill="#1e88e5"/>
<rect x="380.2" y="187.7" width="3.6" height="3.6" fill="#1e88e5"/>
<rect x="388.5" y="180.2" width="3.6" height="3.6" fill="#1e88e5"/>
<rect x="19.7" y="286.8" width="3.6" height="3.6" fill="#1e88e5"/>
<rect x="460.2" y="250.4" width="3.6" height="3.6" fill="#1e88e5"/>
<rect x="464.5" y="257.9" width="3.6" height="3.6" fill="#1e88e5"/>
<rect x="333.7" y="303.1" width="3.6" height="3.6" fill="#1e88e5"/>
<rect x="338.8" y="306.8" width="3.6" height="3.6" fill="#1e88e5"/>
</svg>
</div>
<!-- zoom control -->
<div style="position:absolute;left:17.2px;top:97.7px;width:20.5px;height:40.5px;background:#fff;background-clip:padding-box;border:1.4px solid rgba(0,0,0,.22);border-radius:3.5px"></div>
<div style="position:absolute;left:18.6px;top:118.9px;width:20.5px;height:1px;background:#ccc"></div>
<span class="t" style="left:24px;top:99.6px;font-size:16px;font-weight:700;color:#111">+</span>
<span class="t" style="left:24px;top:120.3px;font-size:16px;font-weight:700;color:#111">−</span>
<!-- info button -->
<div style="position:absolute;left:450.1px;top:92.2px;width:21.2px;height:21.2px;border-radius:50%;background:#16665a"></div>
<svg class="ic" style="left:452.8px;top:94.9px;width:15.8px;height:15.8px" viewBox="0 0 24 24"><path fill="#fff" d="M11 17h2v-6h-2v6zm1-15C6.48 2 2 6.48 2 12s4.48 10 10 10 10-4.48 10-10S17.52 2 12 2zm0 18c-4.41 0-8-3.59-8-8s3.59-8 8-8 8 3.59 8 8-3.59 8-8 8zM11 9h2V7h-2v2z"/></svg>
<!-- marker -->
<div style="position:absolute;left:27.9px;top:196.2px;width:20px;height:20px;border-radius:50%;background:#2b7bff"></div>
<svg class="ic" style="left:30.2px;top:199.5px;width:13.4px;height:13.4px;transform:rotate(-90deg)" viewBox="0 0 24 24"><path fill="#fff" d="M12 2L4.5 20.29l.71.71L12 18l6.79 3 .71-.71z"/></svg>
<!-- attribution -->
<div style="position:absolute;left:340.9px;top:440px;width:131.1px;height:9.5px;background:rgba(255,255,255,.72)"></div>
<span id="t_attr" class="t" style="left:343.2px;top:440.3px;font-size:7.2px;color:#333"><span style="color:#2a7fc0">Leaflet</span> | © <span style="color:#2a7fc0">OpenStreetMap</span> contributors</span>
<!-- red arrow -->
<svg class="ic" style="left:340px;top:52px;width:82px;height:30px" viewBox="340 52 82 30"><polygon fill="#f00" points="345.5,69.8 346,74.3 395.2,68.8 395.5,76.6 416,65.6 395,58.2 395.2,65.2"/><circle cx="346.6" cy="72" r="2.3" fill="#f00"/></svg>
<!-- toolbar icons -->
<svg class="ic" style="left:413.2px;top:58.3px;width:13.6px;height:13.6px" viewBox="0 0 24 24"><path fill="#1c1c1c" d="M3 17.25V21h3.75L17.81 9.94l-3.75-3.75L3 17.25zM20.71 7.04c.39-.39.39-1.02 0-1.41l-2.34-2.34c-.39-.39-1.02-.39-1.41 0l-1.83 1.83 3.75 3.75 1.83-1.83z"/></svg>
<svg class="ic" style="left:434.5px;top:58.2px;width:13.6px;height:13.6px" viewBox="0 0 24 24"><path fill="#1c1c1c" d="M19 9h-4V3H9v6H5l7 7 7-7zM5 18v2h14v-2H5z"/></svg>
<svg class="ic" style="left:455.6px;top:58.5px;width:13.6px;height:13.6px" viewBox="0 0 24 24"><path fill="#1c1c1c" d="M19 6.41L17.59 5 12 10.59 6.41 5 5 6.41 10.59 12 5 17.59 6.41 19 12 13.41 17.59 19 19 17.59 13.41 12z"/></svg>
<!-- timeline -->
<svg class="ic" style="left:23.4px;top:456.5px;width:18.3px;height:18.3px" viewBox="0 0 24 24"><path fill="#6f6f6f" d="M11 18V6l-8.5 6 8.5 6zm.5-6l8.5 6V6l-8.5 6z"/></svg>
<svg class="ic" style="left:51.9px;top:456.5px;width:18.3px;height:18.3px" viewBox="0 0 24 24"><path fill="#6f6f6f" d="M6 6h2v12H6zm3.5 6l8.5 6V6z"/></svg>
<div style="position:absolute;left:78.6px;top:464.7px;width:97px;height:1.4px;background:#f08a63"></div>
<div style="position:absolute;left:175.6px;top:464.7px;width:133.4px;height:1.4px;background:#bdbdbd"></div>
<div style="position:absolute;left:169px;top:458.8px;width:13.2px;height:13.2px;border-radius:50%;background:#e9703f"></div>
<svg class="ic" style="left:317.4px;top:456.4px;width:18.3px;height:18.3px" viewBox="0 0 24 24"><path fill="#6f6f6f" d="M6 18l8.5-6L6 6v12zM16 6v12h2V6h-2z"/></svg>
<svg class="ic" style="left:346.2px;top:456.4px;width:18.3px;height:18.3px" viewBox="0 0 24 24"><path fill="#6f6f6f" d="M4 18l8.5-6L4 6v12zm9-12v12l8.5-6L13 6z"/></svg>
<svg class="ic" style="left:375px;top:456px;width:18.8px;height:18.8px" viewBox="0 0 24 24"><path fill="#c4c4c4" d="M10 16.5l6-4.5-6-4.5v9zM12 2C6.48 2 2 6.48 2 12s4.48 10 10 10 10-4.48 10-10S17.52 2 12 2zm0 18c-4.41 0-8-3.59-8-8s3.59-8 8-8 8 3.59 8 8-3.59 8-8 8z"/></svg>
<svg class="ic" style="left:428.6px;top:458.9px;width:13px;height:13px" viewBox="0 0 24 24"><path fill="#6a6a6a" d="M7 10l5 5 5-5z"/></svg>
<svg class="ic" style="left:448.7px;top:456.1px;width:18.6px;height:18.6px" viewBox="0 0 24 24"><path fill="#4a4a4a" d="M9 16h2V8H9v8zm3-14C6.48 2 2 6.48 2 12s4.48 10 10 10 10-4.48 10-10S17.52 2 12 2zm0 18c-4.41 0-8-3.59-8-8s3.59-8 8-8 8 3.59 8 8-3.59 8-8 8zm1-4h2V8h-2v8z"/></svg>

<!-- right panel -->
<div id="panel"></div>
<div id="hdr"></div>
<div class="fab" style="left:1111.3px;top:46px"></div>
<div class="fab" style="left:1158.5px;top:46px"></div>
<svg class="ic" style="left:1122.6px;top:57.3px;width:15.4px;height:15.4px" viewBox="0 0 24 24"><path fill="#000" fill-opacity=".5" d="M9 16.2L4.8 12l-1.4 1.4L9 19 21 7l-1.4-1.4L9 16.2z"/></svg>
<svg class="ic" style="left:1170.3px;top:57.1px;width:16px;height:16px" viewBox="0 0 24 24"><path fill="#000" fill-opacity=".5" d="M19 6.41L17.59 5 12 10.59 6.41 5 5 6.41 10.59 12 5 17.59 6.41 19 12 13.41 17.59 19 19 17.59 13.41 12z"/></svg>
<svg class="ic" style="left:1154.3px;top:23.8px;width:16px;height:16px" viewBox="0 0 24 24"><path fill="#fff" d="M12 2C6.48 2 2 6.480 2 12s4.480 10 10 10 10-4.480 10-10S17.520 2 12 2zm1 17h-2v-2h2v2zm2.070-7.750l-.9.920C13.450 12.900 13 13.500 13 15h-2v-.5c0-1.100.450-2.100 1.170-2.830l1.240-1.260c.370-.360.590-.860.590-1.410 0-1.100-.9-2-2-2s-2 .9-2 2H8c0-2.210 1.790-4 4-4s4 1.790 4 4c0 .880-.360 1.680-.930 2.250z"/></svg>
<svg class="ic" style="left:1188.9px;top:22.9px;width:17px;height:17px" viewBox="0 0 24 24"><path fill="#fff" d="M19 6.41L17.59 5 12 10.59 6.41 5 5 6.41 10.59 12 5 17.59 6.41 19 12 13.41 17.59 19 19 17.59 13.41 12z"/></svg>
<!-- tabs -->
<div style="position:absolute;left:485px;top:96.5px;width:715px;height:1px;background:repeating-linear-gradient(90deg,#d4d4d4 0 1px,#ececec 1px 2px)"></div>
<div style="position:absolute;left:539.7px;top:95.2px;width:74.6px;height:1.8px;background:#f4734a"></div>

<!-- checkboxes -->
<div class="cb" style="left:501.8px;top:217.7px"></div>
<div class="cbx" style="left:501.5px;top:271.2px"></div>
<div class="cbx" style="left:596.3px;top:271.2px"></div>
<div class="cbx" style="left:698.6px;top:271.2px"></div>
<div class="cbx" style="left:501.5px;top:315.7px"></div>
<div class="cb" style="left:495.5px;top:482.8px"></div>
<svg class="ic" style="left:501.5px;top:271.2px;width:13.2px;height:13.2px" viewBox="0 0 24 24"><path fill="none" stroke="#2b1a12" stroke-width="2.4" d="M5.500 12.500L10 17l9-9.500"/></svg>
<svg class="ic" style="left:596.3px;top:271.2px;width:13.2px;height:13.2px" viewBox="0 0 24 24"><path fill="none" stroke="#2b1a12" stroke-width="2.4" d="M5.500 12.500L10 17l9-9.500"/></svg>
<svg class="ic" style="left:698.6px;top:271.2px;width:13.2px;height:13.2px" viewBox="0 0 24 24"><path fill="none" stroke="#2b1a12" stroke-width="2.4" d="M5.500 12.500L10 17l9-9.500"/></svg>
<svg class="ic" style="left:501.5px;top:315.7px;width:13.2px;height:13.2px" viewBox="0 0 24 24"><path fill="none" stroke="#2b1a12" stroke-width="2.4" d="M5.500 12.500L10 17l9-9.500"/></svg>

<!-- icon preview box -->
<div style="position:absolute;left:647.2px;top:209px;width:20.7px;height:21.4px;border:1px solid #cfcfcf;background:#fff"></div>
<!-- colour dots -->
<div style="position:absolute;left:785px;top:220.4px;width:15.6px;height:15.6px;border-radius:50%;background:#1f1f1f;box-shadow:0 0 0 1.2px #fff,0 1.500px 2px 1px rgba(0,0,0,.22)"></div>
<div style="position:absolute;left:672.9px;top:371.4px;width:15.6px;height:15.6px;border-radius:50%;background:#1f1f1f;box-shadow:0 0 0 1.2px #fff,0 1.500px 2px 1px rgba(0,0,0,.22)"></div>
<div style="position:absolute;left:496.1px;top:370.6px;width:17.2px;height:17.2px;border-radius:50%;background:#fff;box-shadow:0 1px 2.500px rgba(0,0,0,.32)"></div>
<!-- paint bucket icons -->
<svg class="ic" style="left:803.8px;top:204.6px;width:11.4px;height:11.4px" viewBox="0 0 24 24"><path fill="#4d4d4d" d="M16.560 8.940L7.620 0 6.210 1.410l2.380 2.380-5.150 5.150c-.590.590-.590 1.540 0 2.120l5.500 5.500c.290.290.680.440 1.060.440s.770-.150 1.060-.440l5.500-5.500c.590-.580.590-1.530 0-2.120zM5.210 10L10 5.210 14.790 10H5.210zM19 11.500s-2 2.170-2 3.500c0 1.100.9 2 2 2s2-.9 2-2c0-1.330-2-3.500-2-3.500z"/><path fill="#000" fill-opacity=".4" d="M0 20h24v4H0z"/></svg>
<svg class="ic" style="left:516px;top:354.7px;width:11.4px;height:11.4px" viewBox="0 0 24 24"><path fill="#4d4d4d" d="M16.560 8.940L7.620 0 6.210 1.410l2.380 2.380-5.150 5.150c-.590.590-.590 1.540 0 2.120l5.500 5.500c.290.290.680.440 1.060.440s.770-.150 1.060-.440l5.500-5.500c.590-.580.590-1.530 0-2.120zM5.210 10L10 5.210 14.790 10H5.210zM19 11.500s-2 2.170-2 3.500c0 1.100.9 2 2 2s2-.9 2-2c0-1.330-2-3.500-2-3.500z"/><path fill="#000" fill-opacity=".4" d="M0 20h24v4H0z"/></svg>
<svg class="ic" style="left:692.3px;top:354.7px;width:11.4px;height:11.4px" viewBox="0 0 24 24"><path fill="#4d4d4d" d="M16.560 8.940L7.620 0 6.210 1.410l2.380 2.380-5.150 5.150c-.590.590-.590 1.540 0 2.120l5.500 5.500c.290.290.680.440 1.060.440s.770-.150 1.060-.440l5.500-5.500c.590-.580.590-1.530 0-2.120zM5.210 10L10 5.210 14.790 10H5.210zM19 11.500s-2 2.170-2 3.500c0 1.100.9 2 2 2s2-.9 2-2c0-1.330-2-3.500-2-3.500z"/><path fill="#000" fill-opacity=".4" d="M0 20h24v4H0z"/></svg>
<!-- ace editor 1 -->
<div class="al" style="left:852px;top:132.8px;width:348px;height:10.2px"></div>
<div class="gut" style="left:852px;top:132.8px;width:26.7px;height:65.5px"></div>
<div class="gal" style="left:852px;top:132.8px;width:26.7px;height:10.2px"></div>
<div class="mono" style="left:852px;top:134px;width:18.3px;text-align:right;color:#333">1
2
3
4</div>
<svg class="ic" style="left:873.3px;top:136.8px;width:3px;height:2px" viewBox="0 0 6 4"><path fill="#444" d="M0 0h6L3 4z"/></svg>
<div class="mono" style="left:881px;top:134px">{
  <span style="color:#318495">"fontSize"</span>: <span style="color:#036a07">"16px"</span>,
  <span style="color:#318495">"fontWeight"</span>: <span style="color:#0000cd">400</span>
}</div>
<!-- ace editor 2 -->
<div class="al" style="left:815px;top:279px;width:385px;height:10.2px"></div>
<div class="gut" style="left:815px;top:279px;width:26.3px;height:65px"></div>
<div class="gal" style="left:815px;top:279px;width:26.3px;height:10.2px"></div>
<div class="mono" style="left:815px;top:280.2px;width:18.3px;text-align:right;color:#333">1</div>
<div class="mono" style="left:844.2px;top:280.2px">{}</div>

<!-- legend button -->
<div style="position:absolute;left:856px;top:478px;width:107px;height:22.8px;background:#e2e2e2;border-radius:2px"></div>
<svg class="ic" style="left:860.5px;top:482.3px;width:14.6px;height:14.6px" viewBox="0 0 24 24"><path fill="#858585" d="M3 9h14V7H3v2zm0 4h14v-2H3v2zm0 4h14v-2H3v2zm16 0h2v-2h-2v2zm0-10v2h2V7h-2zm0 6h2v-2h-2v2z"/></svg>

<i class="ul" style="left:14px;top:36.4px;width:264.5px"></i>
<i class="ul" style="left:497px;top:159.9px;width:351.0px"></i>
<i class="ul" style="left:674px;top:235.7px;width:109.0px"></i>
<i class="ul" style="left:803px;top:235.7px;width:117.0px"></i>
<i class="ul" style="left:923.5px;top:230.9px;width:136.5px"></i>
<i class="ul" style="left:1065px;top:230.9px;width:135.0px"></i>
<i class="ul" style="left:516px;top:387.0px;width:151.0px"></i>
<i class="ul" style="left:692px;top:387.2px;width:154.5px"></i>
<i class="ul" style="left:849px;top:380.7px;width:175.0px"></i>
<i class="ul" style="left:1027px;top:380.7px;width:173.0px"></i>
<i class="ul" style="left:497px;top:443.6px;width:351.0px"></i>
<i class="ul" style="left:851px;top:443.7px;width:349.0px"></i>
<i class="ul" style="left:497px;top:559.8px;width:351.0px"></i>
<i class="ul" style="left:851px;top:559.8px;width:349.0px"></i>
<i class="ul" style="left:399px;top:474.5px;width:44.0px"></i>
<span id="t_title_lbl" class="t" style="left:13.7px;top:2.46px;font-size:8px;font-weight:400;color:#808080;transform:scaleX(0.9846)">Title</span>
<span id="t_title_ast" class="t" style="left:30.2px;top:3.32px;font-size:6.5px;font-weight:400;color:#808080;transform:scaleX(1.0272)">*</span>
<span id="t_dash" class="t" style="left:14.4px;top:12.88px;font-size:20.8px;font-weight:700;color:#2a2a2a;transform:scaleX(0.9392)">Dashboard1</span>
<span id="t_cardtitle" class="t" style="left:14.4px;top:55.07px;font-size:11.3px;font-weight:400;color:#2a2a2a;transform:scaleX(0.9658)">New Trip Animation</span>
<span id="t_tracker" class="t" style="left:11.3px;top:76.17px;font-size:11.3px;font-weight:400;color:#2a2a2a;transform:scaleX(0.9036)">Tracker1</span>
<span id="t_date" class="t" style="left:148.0px;top:471.06px;font-size:8px;font-weight:700;color:#333;transform:scaleX(0.9667)">Nov 28, 2019 4:30:11 PM</span>
<span id="t_speed" class="t" style="left:400.0px;top:459.37px;font-size:11.3px;font-weight:400;color:#333;transform:scaleX(0.9529)">1</span>
<span id="t_h1" class="t" style="left:506.9px;top:11.34px;font-size:17.3px;font-weight:400;color:#fff;transform:scaleX(0.9368)">NEW TRIP ANIMATION</span>
<span id="t_h2" class="t" style="left:507.0px;top:37.67px;font-size:11.3px;font-weight:400;color:rgba(255,255,255,0.82);transform:scaleX(0.9569)">Trip Animation</span>
<span id="t_tab1" class="t" style="left:501.0px;top:74.44px;font-size:9.9px;font-weight:400;-webkit-text-stroke:.32px #7d7d7d;color:#7d7d7d;transform:scaleX(0.9085)">DATA</span>
<span id="t_tab2" class="t" style="left:555.6px;top:74.44px;font-size:9.9px;font-weight:400;-webkit-text-stroke:.32px #2a7a6c;color:#2a7a6c;transform:scaleX(0.8666)">SETTINGS</span>
<span id="t_tab3" class="t" style="left:630.5px;top:74.44px;font-size:9.9px;font-weight:400;-webkit-text-stroke:.32px #7d7d7d;color:#7d7d7d;transform:scaleX(0.8773)">ADVANCED</span>
<span id="t_tab4" class="t" style="left:709.8px;top:74.44px;font-size:9.9px;font-weight:400;-webkit-text-stroke:.32px #7d7d7d;color:#7d7d7d;transform:scaleX(0.8791)">ACTIONS</span>
<span id="t_gen" class="t" style="left:496.1px;top:107.47px;font-size:11.3px;font-weight:400;color:#212121;transform:scaleX(0.9153)">General settings</span>
<span id="t_l_title" class="t" style="left:497.6px;top:130.89px;font-size:8.3px;font-weight:400;color:#7b7b7b;transform:scaleX(0.9756)">Title</span>
<span id="t_v_title" class="t" style="left:499.1px;top:144.87px;font-size:11.3px;font-weight:400;color:#212121;transform:scaleX(0.9340)">New Trip Animation</span>
<span id="t_tstyle" class="t" style="left:851.6px;top:119.57px;font-size:11.3px;font-weight:400;color:#212121;transform:scaleX(0.9388)">Title style</span>
<span id="t_cb1" class="t" style="left:526.4px;top:218.27px;font-size:11.3px;font-weight:400;color:#212121;transform:scaleX(0.9335)">Display title icon</span>
<span id="t_icon" class="t" style="left:674.6px;top:221.77px;font-size:11.3px;font-weight:400;color:#b3b3b3;transform:scaleX(0.9223)">Icon</span>
<span id="t_l_icolor" class="t" style="left:816.0px;top:205.19px;font-size:8.3px;font-weight:400;color:#7b7b7b;transform:scaleX(0.9449)">Icon color</span>
<span id="t_v_icolor" class="t" style="left:804.5px;top:221.07px;font-size:11.3px;font-weight:400;color:#212121;transform:scaleX(0.8963)">rgba(0, 0, 0, 0.87)</span>
<span id="t_l_isize" class="t" style="left:923.5px;top:201.19px;font-size:8.3px;font-weight:400;color:#7b7b7b;transform:scaleX(0.9405)">Icon size</span>
<span id="t_v_isize" class="t" style="left:925.3px;top:214.77px;font-size:11.3px;font-weight:400;color:#212121;transform:scaleX(0.8980)">24px</span>
<span id="t_ttip" class="t" style="left:1066.3px;top:216.17px;font-size:11.3px;font-weight:400;color:#b3b3b3;transform:scaleX(0.9537)">Title Tooltip</span>
<span id="t_cb2" class="t" style="left:526.3px;top:271.47px;font-size:11.3px;font-weight:400;color:#212121;transform:scaleX(0.9331)">Display title</span>
<span id="t_cb3" class="t" style="left:620.8px;top:271.47px;font-size:11.3px;font-weight:400;color:#212121;transform:scaleX(0.9254)">Drop shadow</span>
<span id="t_cb4" class="t" style="left:724.0px;top:271.47px;font-size:11.3px;font-weight:400;color:#212121;transform:scaleX(0.9253)">Enable fullscreen</span>
<span id="t_wstyle" class="t" style="left:815.0px;top:265.27px;font-size:11.3px;font-weight:400;color:#212121;transform:scaleX(0.9231)">Widget style</span>
<span id="t_cb5" class="t" style="left:526.3px;top:316.07px;font-size:11.3px;font-weight:400;color:#212121;transform:scaleX(0.9226)">Enable data export</span>
<span id="t_l_bg" class="t" style="left:528.6px;top:355.89px;font-size:8.3px;font-weight:400;color:#7b7b7b;transform:scaleX(0.9384)">Background color</span>
<span id="t_v_bg" class="t" style="left:518.3px;top:371.77px;font-size:11.3px;font-weight:400;color:#212121;transform:scaleX(1.0264)">#fff</span>
<span id="t_l_tc" class="t" style="left:704.5px;top:355.89px;font-size:8.3px;font-weight:400;color:#7b7b7b;transform:scaleX(0.9658)">Text color</span>
<span id="t_v_tc" class="t" style="left:693.0px;top:372.27px;font-size:11.3px;font-weight:400;color:#212121;transform:scaleX(0.8885)">rgba(0, 0, 0, 0.87)</span>
<span id="t_l_pad" class="t" style="left:849.0px;top:353.39px;font-size:8.3px;font-weight:400;color:#7b7b7b;transform:scaleX(0.9523)">Padding</span>
<span id="t_v_pad" class="t" style="left:850.8px;top:365.77px;font-size:11.3px;font-weight:400;color:#212121;transform:scaleX(0.9166)">8px</span>
<span id="t_margin" class="t" style="left:1028.5px;top:367.27px;font-size:11.3px;font-weight:400;color:#b3b3b3;transform:scaleX(0.9412)">Margin</span>
<span id="t_special" class="t" style="left:498.0px;top:429.07px;font-size:11.3px;font-weight:400;color:#b3b3b3;transform:scaleX(0.9274)">Special symbol to show next to value</span>
<span id="t_digits" class="t" style="left:852.5px;top:429.27px;font-size:11.3px;font-weight:400;color:#b3b3b3;transform:scaleX(0.9549)">Number of digits after floating point</span>
<span id="t_cb6" class="t" style="left:515.8px;top:483.17px;font-size:11.3px;font-weight:400;color:#212121;transform:scaleX(0.9162)">Display legend</span>
<span id="t_legbtn" class="t" style="left:877.8px;top:483.34px;font-size:9.9px;font-weight:400;-webkit-text-stroke:.32px #878787;color:#878787;transform:scaleX(0.8724)">LEGEND SETTINGS</span>
<span id="t_mobile" class="t" style="left:496.2px;top:514.77px;font-size:11.3px;font-weight:400;color:#212121;transform:scaleX(0.9443)">Mobile mode settings</span>
<span id="t_order" class="t" style="left:498.0px;top:545.27px;font-size:11.3px;font-weight:400;color:#b3b3b3;transform:scaleX(0.8826)">Order</span>
<span id="t_height" class="t" style="left:852.5px;top:545.27px;font-size:11.3px;font-weight:400;color:#b3b3b3;transform:scaleX(0.9340)">Height</span>
</body>
</html>
